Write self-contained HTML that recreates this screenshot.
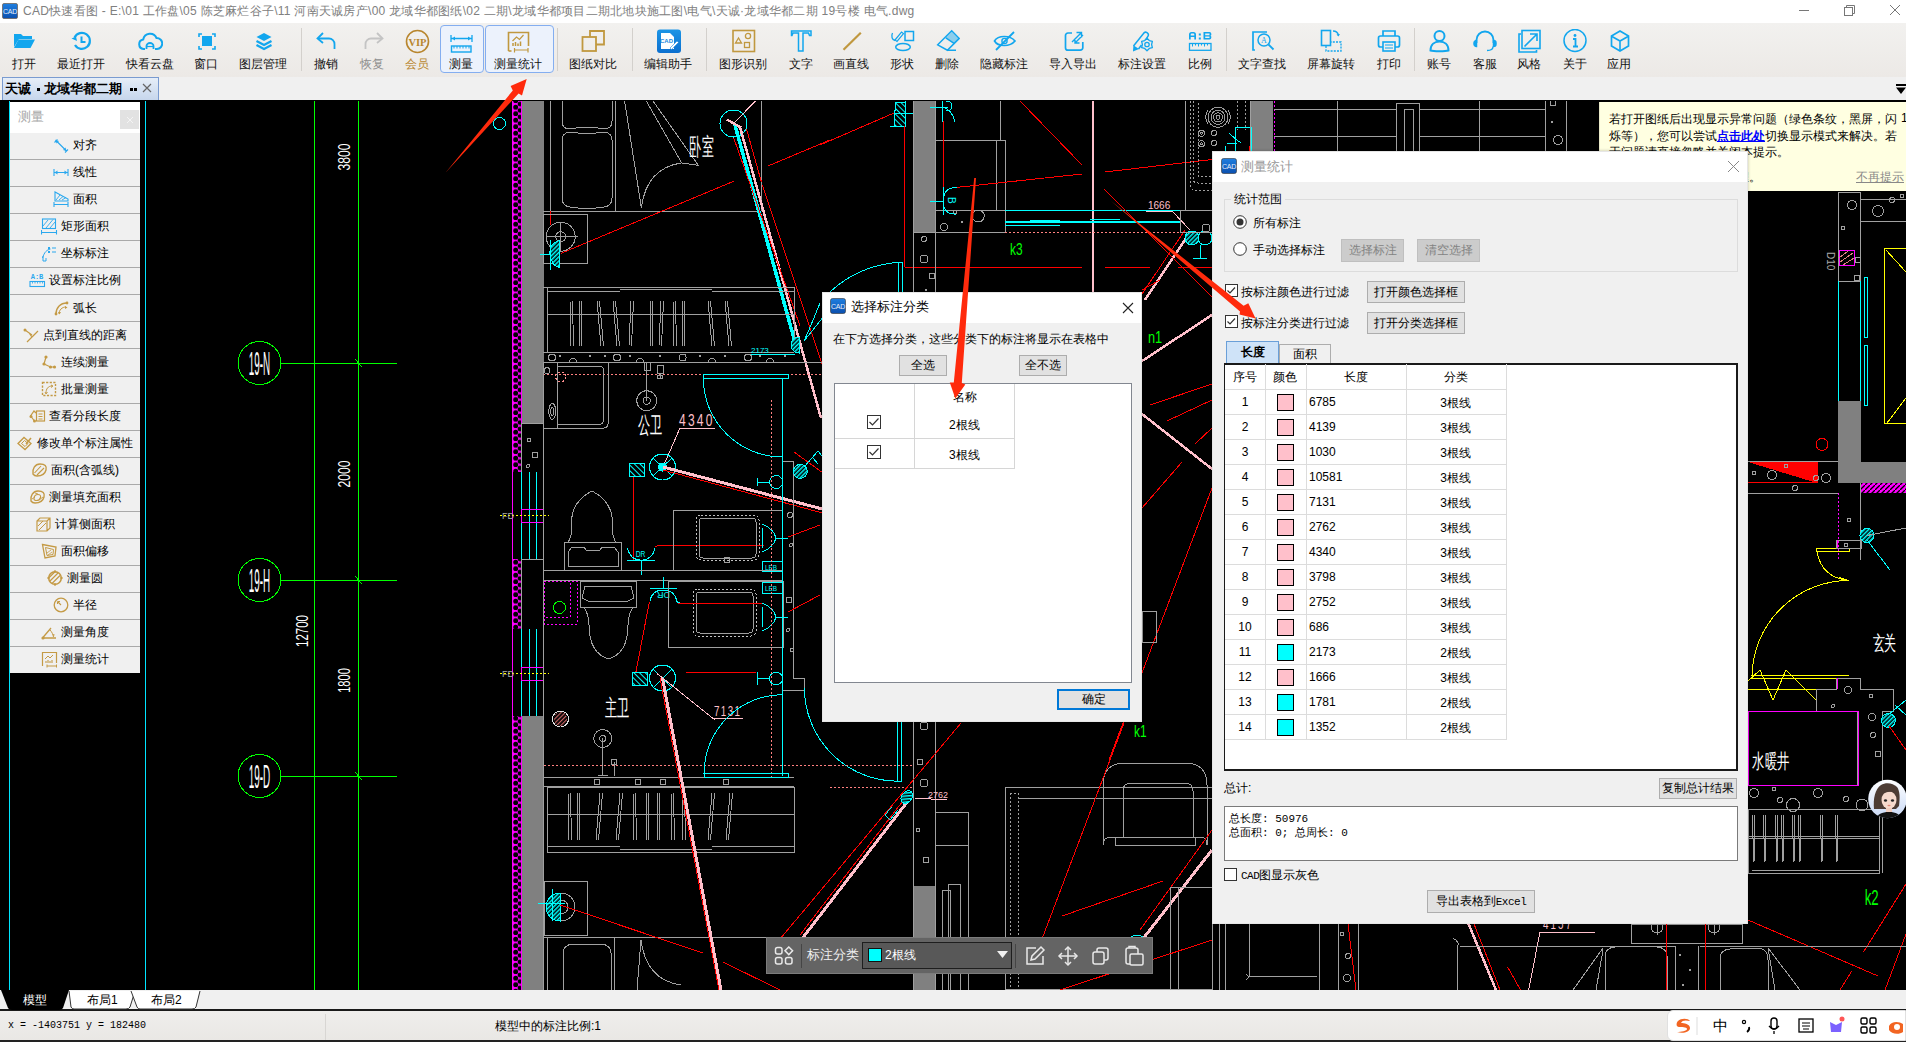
<!DOCTYPE html>
<html><head><meta charset="utf-8">
<style>
*{margin:0;padding:0;box-sizing:border-box}
html,body{width:1906px;height:1042px;overflow:hidden;background:#000;font-family:"Liberation Sans",sans-serif;font-size:12px;color:#000}
.a{position:absolute}
#title{left:0;top:0;width:1906px;height:23px;background:#fff}
#title .t{left:23px;top:3px;font-size:12px;color:#808080;white-space:nowrap;letter-spacing:.27px}
#tb{left:0;top:23px;width:1906px;height:54px;background:linear-gradient(#f2f1ef,#ece9e6)}
.ti{top:0;height:54px;text-align:center}
.ti .l{position:absolute;top:33px;left:-40px;width:80px;text-align:center;font-size:12px;color:#000;white-space:nowrap;font-weight:500}
.ti svg{position:absolute;left:-14px;top:5px}
.sep{top:5px;width:1px;height:43px;background:#d3d0cc}
#tabs{left:0;top:77px;width:1906px;height:24px;background:#f0f0f0}
#canvas{left:0;top:101px;width:1906px;height:889px;background:#000;overflow:hidden}
#ltabs{left:0;top:990px;width:1906px;height:21px;background:#f0f0f0;border-bottom:2px solid #1a1a1a}
#status{left:0;top:1011px;width:1906px;height:31px;background:linear-gradient(#efeeec,#e9e7e4)}
.lpr{left:10px;width:130px;height:26px;display:flex;align-items:center;justify-content:center;gap:3px;font-size:12px;color:#000;white-space:nowrap}
.lpr svg{flex:none}
.dlg{background:#f0f0f0;border:1px solid #e6e6e6;box-shadow:0 0 3px rgba(0,0,0,.25)}
.btn{background:#e1e1e1;border:1px solid #adadad;text-align:center;font-size:12px;line-height:19px;color:#000;white-space:nowrap}
.ctr{width:60px;text-align:center;font-size:12px;white-space:nowrap}
</style></head><body>
<div id="title" class="a">
<svg class="a" style="left:2px;top:3px" width="16" height="16"><defs><linearGradient id="ig1" x1="0" y1="0" x2="0" y2="1"><stop offset="0" stop-color="#1f7fe0"/><stop offset="1" stop-color="#0b4fae"/></linearGradient></defs><rect x="0.5" y="0.5" width="15" height="15" rx="1.5" fill="url(#ig1)" stroke="#6b5a4a" stroke-width=".7"/><text x="8" y="11" text-anchor="middle" font-size="7" fill="#e8eef8" font-family="Liberation Sans" letter-spacing="-.3">CAD</text></svg>
  <div class="t a">CAD快速看图 - E:\01 工作盘\05 陈芝麻烂谷子\11 河南天诚房产\00 龙域华都图纸\02 二期\龙域华都项目二期北地块施工图\电气\天诚·龙域华都二期 19号楼 电气.dwg</div>
<svg class="a" style="left:1790px;top:0" width="116" height="22"><path d="M9 10.5h10" stroke="#777" stroke-width="1"/><rect x="54.5" y="7.5" width="8" height="8" fill="none" stroke="#777"/><path d="M56.5 7.5V5.5h8v8h-2" fill="none" stroke="#777"/><path d="M100 5l10 10M110 5l-10 10" stroke="#777" stroke-width="1"/></svg>
</div>
<div id="tb" class="a">
<div class="a" style="left:440px;top:2px;width:44px;height:48px;border:1px solid #84aef0;border-radius:4px;background:#ecf2fc"></div>
<div class="a" style="left:485px;top:2px;width:69px;height:48px;border:1px solid #84aef0;border-radius:4px;background:#ecf2fc"></div>
<div class="ti a" style="left:23.5px"><svg width="25" height="25" viewBox="0 0 25 25" style="left:-12px;top:6px"><path d="M2 5h7l2 2h9v3H7L2 18z" fill="#12a6ee"/><path d="M6.5 10.5H23l-4.5 8.5H2z" fill="#12a6ee"/></svg><div class="l" style="color:#111">打开</div></div>
<div class="ti a" style="left:80.5px"><svg width="25" height="25" viewBox="0 0 25 25" style="left:-12px;top:6px"><path d="M5.6 8.5A8 8 0 1 1 6 16" fill="none" stroke="#12a6ee" stroke-width="2.2"/><path d="M2.5 9.5l4.5-2 1 4.5z" fill="#12a6ee"/><path d="M12.5 7.5v5.5h4" fill="none" stroke="#12a6ee" stroke-width="2"/></svg><div class="l" style="color:#111">最近打开</div></div>
<div class="ti a" style="left:149.5px"><svg width="25" height="25" viewBox="0 0 25 25" style="left:-12px;top:6px"><path d="M7 20H5.5A4.8 4.8 0 0 1 5.2 10.5 7 7 0 0 1 18.5 9a5.5 5.5 0 0 1 .5 11H17" fill="none" stroke="#12a6ee" stroke-width="2"/><path d="M8.5 20v-3a3.5 3 0 0 1 7 0v3" fill="none" stroke="#12a6ee" stroke-width="1.8"/><path d="M9 17.5h6" stroke="#12a6ee" stroke-width="1.2"/></svg><div class="l" style="color:#111">快看云盘</div></div>
<div class="ti a" style="left:206px"><svg width="25" height="25" viewBox="0 0 25 25" style="left:-12px;top:6px"><rect x="8" y="7" width="10" height="10" fill="#12a6ee"/><path d="M5 8V5h3M18 5h3v3M21 17v3h-3M8 20H5v-3" fill="none" stroke="#12a6ee" stroke-width="1.6"/></svg><div class="l" style="color:#111">窗口</div></div>
<div class="ti a" style="left:263.4px"><svg width="25" height="25" viewBox="0 0 25 25" style="left:-12px;top:6px"><path d="M13 4l7.5 4-7.5 4-7.5-4z" fill="#12a6ee"/><path d="M5.5 12l7.5 4 7.5-4" fill="none" stroke="#12a6ee" stroke-width="2.2"/><path d="M5.5 16l7.5 4 7.5-4" fill="none" stroke="#12a6ee" stroke-width="2.2"/></svg><div class="l" style="color:#111">图层管理</div></div>
<div class="ti a" style="left:326px"><svg width="25" height="25" viewBox="0 0 25 25" style="left:-12px;top:6px"><path d="M9 4L3.5 9.5 9 14" fill="none" stroke="#12a6ee" stroke-width="1.8"/><path d="M4 9.5h11a5.5 5.5 0 0 1 5.5 5.5v5" fill="none" stroke="#12a6ee" stroke-width="1.8"/></svg><div class="l" style="color:#111">撤销</div></div>
<div class="ti a" style="left:371.5px"><svg width="25" height="25" viewBox="0 0 25 25" style="left:-12px;top:6px"><path d="M17 4l5.5 5.5L17 14" fill="none" stroke="#c4c4c4" stroke-width="1.8"/><path d="M22 9.5H11a5.5 5.5 0 0 0-5.5 5.5v5" fill="none" stroke="#c4c4c4" stroke-width="1.8"/></svg><div class="l" style="color:#8f8f8f">恢复</div></div>
<div class="ti a" style="left:416.5px"><svg width="25" height="25" viewBox="0 0 25 25" style="left:-12px;top:6px"><circle cx="12.5" cy="12.5" r="11" fill="none" stroke="#b8862e" stroke-width="1.6"/><text x="12.5" y="16.5" text-anchor="middle" font-family="Liberation Serif" font-weight="bold" font-size="10.5" fill="#b8862e">VIP</text></svg><div class="l" style="color:#b8862e">会员</div></div>
<div class="ti a" style="left:461px"><svg width="25" height="25" viewBox="0 0 25 25" style="left:-12px;top:6px"><path d="M2 6v7M23 6v7M2.5 9.5h20" fill="none" stroke="#12a6ee" stroke-width="1.3"/><path d="M3 9.5l3-2v4zM22 9.5l-3-2v4z" fill="#12a6ee"/><rect x="2.5" y="17" width="19.5" height="6" fill="none" stroke="#12a6ee" stroke-width="1.4"/><path d="M5 17v2.5M8 17v2.5M11 17v2.5M14 17v2.5M17 17v2.5M20 17v2.5" stroke="#12a6ee" stroke-width="1"/></svg><div class="l" style="color:#111">测量</div></div>
<div class="ti a" style="left:518px"><svg width="25" height="25" viewBox="0 0 25 25" style="left:-12px;top:6px"><path d="M2.5 22V3.5h20V17" fill="none" stroke="#c0983f" stroke-width="1.6"/><path d="M2.5 22h3" stroke="#c0983f" stroke-width="1.6"/><path d="M6.5 12l4-4 3 2.5 4-4.5" fill="none" stroke="#c0983f" stroke-width="1.2"/><path d="M7 17v-3M9.5 17v-4M12 17v-2.5M14.5 17v-4.5" stroke="#c0983f" stroke-width="1.5"/><path d="M8.5 19v4.5M22 19v4.5M9 21h12.5" stroke="#c0983f" stroke-width="1.2"/></svg><div class="l" style="color:#111">测量统计</div></div>
<div class="ti a" style="left:593.4px"><svg width="25" height="25" viewBox="0 0 25 25" style="left:-12px;top:6px"><rect x="1.5" y="8" width="13.5" height="14" fill="none" stroke="#c0983f" stroke-width="1.8"/><path d="M9 8V2h14v13.5h-8" fill="none" stroke="#c0983f" stroke-width="1.8"/></svg><div class="l" style="color:#111">图纸对比</div></div>
<div class="ti a" style="left:668px"><svg width="25" height="25" viewBox="0 0 25 25" style="left:-12px;top:6px"><defs><linearGradient id="eg" x1="0" y1="0" x2="0" y2="1"><stop offset="0" stop-color="#1c95e6"/><stop offset="1" stop-color="#0b6fcf"/></linearGradient></defs><rect x="1" y="0.5" width="24" height="23.5" rx="3" fill="url(#eg)"/><path d="M5 4h9l4 4v12H5z" fill="#fff"/><text x="10.5" y="14" text-anchor="middle" font-size="6" font-weight="bold" fill="#1a88dd" font-family="Liberation Sans">CAD</text><path d="M14 19l7-7 1.5 1.5-7 7z" fill="#fff" stroke="#1a88dd" stroke-width=".6"/></svg><div class="l" style="color:#111">编辑助手</div></div>
<div class="ti a" style="left:743px"><svg width="25" height="25" viewBox="0 0 25 25" style="left:-12px;top:6px"><rect x="2" y="1.5" width="21.5" height="21" fill="none" stroke="#c0983f" stroke-width="1.6"/><path d="M4.5 14l3-5 3 5z" fill="none" stroke="#c0983f" stroke-width="1.3"/><circle cx="17" cy="7" r="2.6" fill="none" stroke="#c0983f" stroke-width="1.3"/><rect x="13.5" y="13.5" width="5" height="5" fill="none" stroke="#c0983f" stroke-width="1.3"/></svg><div class="l" style="color:#111">图形识别</div></div>
<div class="ti a" style="left:801px"><svg width="25" height="25" viewBox="0 0 25 25" style="left:-12px;top:6px"><path d="M2.5 2h19.5v4.5h-1.5l-1-2.5h-5.5v18h-4.5V4H4l-1 2.5H2.5z" fill="none" stroke="#12a6ee" stroke-width="1.5"/></svg><div class="l" style="color:#111">文字</div></div>
<div class="ti a" style="left:851px"><svg width="25" height="25" viewBox="0 0 25 25" style="left:-12px;top:6px"><path d="M4.5 20.7L21.8 3.8" stroke="#c0983f" stroke-width="2.2"/></svg><div class="l" style="color:#111">画直线</div></div>
<div class="ti a" style="left:902px"><svg width="25" height="25" viewBox="0 0 25 25" style="left:-12px;top:6px"><rect x="15" y="2.5" width="8.5" height="9" fill="none" stroke="#12a6ee" stroke-width="1.5"/><ellipse cx="13" cy="18" rx="7.3" ry="3.6" fill="none" stroke="#12a6ee" stroke-width="1.5"/><path d="M5 11L11.5 3l2 1.6L7 12.5z" fill="none" stroke="#12a6ee" stroke-width="1.2"/><path d="M2.5 4c-1.5 3-.5 7 2.5 7.5" fill="none" stroke="#12a6ee" stroke-width="1.3"/></svg><div class="l" style="color:#111">形状</div></div>
<div class="ti a" style="left:947px"><svg width="25" height="25" viewBox="0 0 25 25" style="left:-12px;top:6px"><path d="M2.7 15.8L16.7 1.8 24.2 9.4 12.4 21.2z" fill="none" stroke="#12a6ee" stroke-width="1.5"/><path d="M10.8 8.8L16.7 2.8 23.2 9.4 19.4 14.7z" fill="#12a6ee" opacity=".45"/><path d="M10.8 8.8L19.4 14.7M12.4 21.2H21" stroke="#12a6ee" stroke-width="1.4"/></svg><div class="l" style="color:#111">删除</div></div>
<div class="ti a" style="left:1004px"><svg width="25" height="25" viewBox="0 0 25 25" style="left:-12px;top:6px"><path d="M2.5 12C6 6 18 6 23 12c-5 6-17 6-20.5 0z" fill="none" stroke="#12a6ee" stroke-width="1.7"/><circle cx="12.5" cy="12" r="2.6" fill="none" stroke="#12a6ee" stroke-width="1.4"/><path d="M4 21L22 3" stroke="#12a6ee" stroke-width="1.8"/></svg><div class="l" style="color:#111">隐藏标注</div></div>
<div class="ti a" style="left:1073px"><svg width="25" height="25" viewBox="0 0 25 25" style="left:-12px;top:6px"><path d="M11 4H7a2.5 2.5 0 0 0-2.5 2.5v12.2A2.5 2.5 0 0 0 7 21.2h12.3a2.5 2.5 0 0 0 2.5-2.5V13" fill="none" stroke="#12a6ee" stroke-width="1.7"/><path d="M11 13l9-9M15.5 3.5H20.5V8.5M22 6l-8 8M14 9.5V14h4.5" fill="none" stroke="#12a6ee" stroke-width="1.4"/></svg><div class="l" style="color:#111">导入导出</div></div>
<div class="ti a" style="left:1142px"><svg width="25" height="25" viewBox="0 0 25 25" style="left:-12px;top:6px"><path d="M3.5 17L13.5 4.5a2.6 2.6 0 0 1 4.5 2.6L15.3 11.5M8.5 20L11.5 16" fill="none" stroke="#12a6ee" stroke-width="1.5" stroke-linejoin="round"/><path d="M3 22.5l.4-6.2 5.6 3.7z" fill="#12a6ee"/><path d="M17.00 9.30 L19.30 11.52 L22.37 12.40 L21.60 15.50 L22.37 18.60 L19.30 19.48 L17.00 21.70 L14.70 19.48 L11.63 18.60 L12.40 15.50 L11.63 12.40 L14.70 11.52Z" fill="#efedea" stroke="#12a6ee" stroke-width="1.3" stroke-linejoin="round"/><circle cx="17" cy="15.5" r="2.2" fill="none" stroke="#12a6ee" stroke-width="1.3"/></svg><div class="l" style="color:#111">标注设置</div></div>
<div class="ti a" style="left:1200px"><svg width="25" height="25" viewBox="0 0 25 25" style="left:-12px;top:6px"><g fill="#12a6ee"><path d="M1 10.5V5.5Q1 3 3.5 3h2Q8 3 8 5.5v5H6.3V8H2.7v2.5zM2.7 6.5h3.6v-1q0-1-1-1H3.7q-1 0-1 1z"/><rect x="10.8" y="4.5" width="2" height="2"/><rect x="10.8" y="8.5" width="2" height="2"/><path fill-rule="evenodd" d="M15.5 3h6q1.8 0 1.8 1.8v1.2l-.8.8.8.8v1.2Q23.3 10.5 21.5 10.5h-6zM17.2 4.5v1.7h4.3V4.5zM17.2 7.4v1.7h4.3V7.4z"/></g><rect x="1.5" y="14.5" width="21.5" height="6.8" fill="none" stroke="#12a6ee" stroke-width="1.3"/><path d="M4.5 15v2.5M7.5 15v1.5M10.5 15v2.5M13.5 15v1.5M16.5 15v2.5M19.5 15v1.5" stroke="#12a6ee" stroke-width="1"/></svg><div class="l" style="color:#111">比例</div></div>
<div class="ti a" style="left:1262px"><svg width="25" height="25" viewBox="0 0 25 25" style="left:-12px;top:6px"><path d="M17 3H3v18h2" fill="none" stroke="#12a6ee" stroke-width="1.7"/><circle cx="14" cy="11" r="6" fill="none" stroke="#12a6ee" stroke-width="1.5"/><path d="M18.5 15.5l5 5" stroke="#12a6ee" stroke-width="1.8"/><text x="14" y="14" text-anchor="middle" font-size="8" fill="#12a6ee" font-family="Liberation Serif">A</text></svg><div class="l" style="color:#111">文字查找</div></div>
<div class="ti a" style="left:1331px"><svg width="25" height="25" viewBox="0 0 25 25" style="left:-12px;top:6px"><rect x="2.5" y="1.5" width="9" height="15" fill="none" stroke="#12a6ee" stroke-width="1.6"/><path d="M7 17v5h15v-9h-10" fill="none" stroke="#12a6ee" stroke-width="1.3" stroke-dasharray="2 1.2"/><path d="M14 2c3 0 5 2 5.5 4.5" fill="none" stroke="#12a6ee" stroke-width="1.3"/><path d="M17.5 5.5l2 2 1.5-2.5z" fill="#12a6ee"/></svg><div class="l" style="color:#111">屏幕旋转</div></div>
<div class="ti a" style="left:1389px"><svg width="25" height="25" viewBox="0 0 25 25" style="left:-12px;top:6px"><path d="M6 7V2h12v5" fill="none" stroke="#12a6ee" stroke-width="1.7"/><rect x="1.5" y="7" width="21" height="11" rx="2" fill="none" stroke="#12a6ee" stroke-width="1.7"/><rect x="6" y="13" width="12" height="9" fill="#f0efed" stroke="#12a6ee" stroke-width="1.6"/><path d="M8 16h8M8 19h8" stroke="#12a6ee" stroke-width="1"/></svg><div class="l" style="color:#111">打印</div></div>
<div class="ti a" style="left:1439px"><svg width="25" height="25" viewBox="0 0 25 25" style="left:-12px;top:6px"><circle cx="12.5" cy="7" r="5" fill="none" stroke="#12a6ee" stroke-width="2"/><path d="M3.5 21.5c0-6 4-9 9-9s9 3 9 9c-3 1-15 1-18 0z" fill="none" stroke="#12a6ee" stroke-width="2"/></svg><div class="l" style="color:#111">账号</div></div>
<div class="ti a" style="left:1485px"><svg width="25" height="25" viewBox="0 0 25 25" style="left:-12px;top:6px"><path d="M3.5 14V11a8.5 8.5 0 0 1 17 0v3" fill="none" stroke="#12a6ee" stroke-width="1.8"/><path d="M3.5 11.5v6a2.5 2.5 0 0 1-2.5-2.5v-1a2.5 2.5 0 0 1 2.5-2.5zM20.5 11.5v6a2.5 2.5 0 0 0 2.5-2.5v-1a2.5 2.5 0 0 0-2.5-2.5z" fill="#12a6ee" stroke="#12a6ee" stroke-width="1.5"/><path d="M20 17.5c0 3-2 4-6 4" fill="none" stroke="#12a6ee" stroke-width="1.3"/></svg><div class="l" style="color:#111">客服</div></div>
<div class="ti a" style="left:1529px"><svg width="25" height="25" viewBox="0 0 25 25" style="left:-12px;top:6px"><path d="M4 5H2v18h17.5v-2" fill="none" stroke="#12a6ee" stroke-width="1.6"/><rect x="5" y="1.5" width="18" height="18" fill="none" stroke="#12a6ee" stroke-width="1.6"/><path d="M7.5 17.5L20 5M13 5h7v7" fill="none" stroke="#12a6ee" stroke-width="1.6"/></svg><div class="l" style="color:#111">风格</div></div>
<div class="ti a" style="left:1575px"><svg width="25" height="25" viewBox="0 0 25 25" style="left:-12px;top:6px"><circle cx="12" cy="11.5" r="11" fill="none" stroke="#12a6ee" stroke-width="1.5"/><circle cx="12" cy="6.5" r="1.4" fill="#12a6ee"/><path d="M10 10h2.5v7.5M10 17.5h5" fill="none" stroke="#12a6ee" stroke-width="1.8"/></svg><div class="l" style="color:#111">关于</div></div>
<div class="ti a" style="left:1619px"><svg width="25" height="25" viewBox="0 0 25 25" style="left:-12px;top:6px"><path d="M13 2l8.5 5v10L13 22l-8.5-5V7z" fill="none" stroke="#12a6ee" stroke-width="1.7"/><path d="M5 7.5l8 4.5 8-4.5M13 12v9.5" fill="none" stroke="#12a6ee" stroke-width="1.6"/></svg><div class="l" style="color:#111">应用</div></div>
<div class="sep a" style="left:301px"></div>
<div class="sep a" style="left:557px"></div>
<div class="sep a" style="left:632px"></div>
<div class="sep a" style="left:706px"></div>
<div class="sep a" style="left:1226px"></div>
<div class="sep a" style="left:1414px"></div>
</div>
<div id="tabs" class="a">
<div class="a" style="left:2px;top:0;width:157px;height:24px;border:1px solid #7a9bd0;background:linear-gradient(#e6eef8,#c6d6ec);"></div>
<div class="a" style="left:5px;top:3px;font-size:13px;font-weight:bold;color:#000;white-space:nowrap">天诚</div>
<div class="a" style="left:37px;top:88px;top:11px;width:3px;height:3px;background:#000"></div>
<div class="a" style="left:44px;top:3px;font-size:13px;font-weight:bold;color:#000;white-space:nowrap">龙域华都二期</div>
<div class="a" style="left:130px;top:11px;width:2.5px;height:3px;background:#000"></div><div class="a" style="left:134px;top:11px;width:2.5px;height:3px;background:#000"></div>
<svg class="a" style="left:142px;top:6px" width="10" height="10"><path d="M1 1l8 8M9 1l-8 8" stroke="#666" stroke-width="1.2"/></svg>
<svg class="a" style="left:1896px;top:7px" width="10" height="12"><path d="M0 0h10v2H0z M0 3.5h10L5 10z" fill="#000"/></svg>
<div class="a" style="left:0;top:23px;width:1906px;height:1px;background:#000"></div>
</div>
<div id="canvas" class="a">
<svg class="a" style="left:0;top:-101px" width="1906" height="1042" font-family="Liberation Sans"><defs>
<pattern id="mghatch" x="512" y="0" width="9" height="6.5" patternUnits="userSpaceOnUse"><rect width="9" height="6.5" fill="#ff00ff"/><circle cx="3.7" cy="3.2" r="2.45" fill="#000"/><circle cx="7.9" cy="0" r="2.3" fill="#000"/><circle cx="7.9" cy="6.5" r="2.3" fill="#000"/></pattern>
<pattern id="cyhatch" width="3" height="3" patternUnits="userSpaceOnUse" patternTransform="rotate(45)"><rect width="3" height="3" fill="#000"/><rect width="1.5" height="3" fill="#00ffff"/></pattern>
<pattern id="brhatch" width="3" height="3" patternUnits="userSpaceOnUse" patternTransform="rotate(45)"><rect width="3" height="3" fill="#000"/><rect width="1.2" height="3" fill="#c86464"/></pattern>
<pattern id="mghatch2" width="5" height="5" patternUnits="userSpaceOnUse"><rect width="5" height="5" fill="#ff00ff"/><path d="M0 5L5 0" stroke="#000" stroke-width="1.3"/></pattern>
<pattern id="cyhatch2" width="4" height="4" patternUnits="userSpaceOnUse" patternTransform="rotate(-45)"><rect width="4" height="4" fill="#000"/><rect width="1" height="4" fill="#00ffff"/></pattern>
</defs><g shape-rendering="crispEdges"><line x1="314.5" y1="101" x2="314.5" y2="990" stroke="#00ff00" stroke-width="1" />
<line x1="358.5" y1="101" x2="358.5" y2="990" stroke="#00ff00" stroke-width="1" />
<circle cx="259.5" cy="363" r="21.5" stroke="#00ff00" stroke-width="1" fill="none" />
<line x1="281" y1="363.5" x2="397" y2="363.5" stroke="#00ff00" stroke-width="1" />
<text x="259.5" y="375" fill="#fff" font-size="33" text-anchor="middle" transform="translate(259.5 363) scale(.3 1) translate(-259.5 -363)" font-family="Liberation Sans">19-N</text>
<line x1="355" y1="359" x2="362" y2="367" stroke="#00ff00" stroke-width="1" />
<circle cx="259.5" cy="580" r="21.5" stroke="#00ff00" stroke-width="1" fill="none" />
<line x1="281" y1="580.5" x2="397" y2="580.5" stroke="#00ff00" stroke-width="1" />
<text x="259.5" y="592" fill="#fff" font-size="33" text-anchor="middle" transform="translate(259.5 580) scale(.3 1) translate(-259.5 -580)" font-family="Liberation Sans">19-H</text>
<line x1="355" y1="576" x2="362" y2="584" stroke="#00ff00" stroke-width="1" />
<circle cx="259.5" cy="776" r="21.5" stroke="#00ff00" stroke-width="1" fill="none" />
<line x1="281" y1="776.5" x2="397" y2="776.5" stroke="#00ff00" stroke-width="1" />
<text x="259.5" y="788" fill="#fff" font-size="33" text-anchor="middle" transform="translate(259.5 776) scale(.3 1) translate(-259.5 -776)" font-family="Liberation Sans">19-D</text>
<line x1="355" y1="772" x2="362" y2="780" stroke="#00ff00" stroke-width="1" />
<text x="0" y="0" fill="#fff" font-size="23" text-anchor="middle" transform="translate(350 157) rotate(-90) scale(0.53 .75)" font-family="Liberation Sans">3800</text>
<text x="0" y="0" fill="#fff" font-size="23" text-anchor="middle" transform="translate(349.5 474) rotate(-90) scale(0.53 .75)" font-family="Liberation Sans">2000</text>
<text x="0" y="0" fill="#fff" font-size="23" text-anchor="middle" transform="translate(307.5 631) rotate(-90) scale(0.5 .75)" font-family="Liberation Sans">12700</text>
<text x="0" y="0" fill="#fff" font-size="23" text-anchor="middle" transform="translate(350 680.5) rotate(-90) scale(0.48 .75)" font-family="Liberation Sans">1800</text>
<rect x="512" y="101" width="9.5" height="889" stroke="none" stroke-width="0" fill="#ff00ff" />
<rect x="512" y="101" width="9.5" height="889" fill="url(#mghatch)"/>
<line x1="512.7" y1="101" x2="512.7" y2="990" stroke="#ff00ff" stroke-width="1.4" />
<rect x="521.5" y="101" width="22" height="889" stroke="none" stroke-width="0" fill="#808080" />
<rect x="521.5" y="423" width="22" height="49" stroke="none" stroke-width="0" fill="#000" />
<rect x="521.5" y="423" width="22" height="49" stroke="#a0a0a0" stroke-width="1" fill="none" />
<rect x="521.5" y="472" width="22" height="87" stroke="none" stroke-width="0" fill="#000" />
<rect x="512" y="472" width="9.5" height="87" stroke="none" stroke-width="0" fill="#000" />
<line x1="521.5" y1="472" x2="521.5" y2="559" stroke="#00ffff" stroke-width="1" />
<line x1="529.5" y1="472" x2="529.5" y2="559" stroke="#00ffff" stroke-width="1" />
<line x1="536.5" y1="472" x2="536.5" y2="559" stroke="#00ffff" stroke-width="1" />
<line x1="543.5" y1="472" x2="543.5" y2="559" stroke="#00ffff" stroke-width="1" />
<line x1="512.5" y1="472" x2="512.5" y2="559" stroke="#ff00ff" stroke-width="1" />
<rect x="521.5" y="509" width="22" height="13" stroke="#ff00ff" stroke-width="1" fill="none" />
<line x1="500" y1="515" x2="549" y2="515" stroke="#ffff00" stroke-width="1" stroke-dasharray="2 2"/>
<text x="502" y="519" fill="#aaa" font-size="9" >FD</text>
<rect x="521.5" y="559" width="22" height="70" stroke="none" stroke-width="0" fill="#000" />
<rect x="521.5" y="559" width="22" height="70" stroke="#a0a0a0" stroke-width="1" fill="none" />
<rect x="521.5" y="629" width="22" height="87" stroke="none" stroke-width="0" fill="#000" />
<rect x="512" y="629" width="9.5" height="87" stroke="none" stroke-width="0" fill="#000" />
<line x1="521.5" y1="629" x2="521.5" y2="716" stroke="#00ffff" stroke-width="1" />
<line x1="529.5" y1="629" x2="529.5" y2="716" stroke="#00ffff" stroke-width="1" />
<line x1="536.5" y1="629" x2="536.5" y2="716" stroke="#00ffff" stroke-width="1" />
<line x1="543.5" y1="629" x2="543.5" y2="716" stroke="#00ffff" stroke-width="1" />
<line x1="512.5" y1="629" x2="512.5" y2="716" stroke="#ff00ff" stroke-width="1" />
<rect x="521.5" y="667" width="22" height="13" stroke="#ff00ff" stroke-width="1" fill="none" />
<line x1="500" y1="673" x2="549" y2="673" stroke="#ffff00" stroke-width="1" stroke-dasharray="2 2"/>
<text x="502" y="677" fill="#aaa" font-size="9" >FD</text>
<circle cx="499.5" cy="123.5" r="6" stroke="#00ffff" stroke-width="1" fill="none" />
<line x1="550" y1="101" x2="550" y2="211" stroke="#a0a0a0" stroke-width="1" />
<line x1="615.5" y1="101" x2="615.5" y2="211" stroke="#a0a0a0" stroke-width="1" />
<line x1="761.5" y1="101" x2="761.5" y2="211" stroke="#a0a0a0" stroke-width="1" />
<line x1="543" y1="211" x2="761" y2="211" stroke="#a0a0a0" stroke-width="1" />
<path d="M562 101v20q0 8 8 8q17-4 34 0q8 0 8-8V101" stroke="#a0a0a0" stroke-width="1" fill="none" />
<path d="M562 140q0-7 8-8q17 3 34 0q8 1 8 8v58q0 8-8 9q-17 3-34 0q-8-1-8-9z" stroke="#a0a0a0" stroke-width="1" fill="none" />
<path d="M624.6 101L641.4 208M646.3 101l35.4 61.9M653 101l45.4 64.4l-16.7-2.5q-35 5-40.3 44.5" stroke="#a0a0a0" stroke-width="1" fill="none" />
<text x="689.5" y="155" fill="#fff" font-size="24" transform="translate(689.5 155) scale(.5 1) translate(-689.5 -155)">卧室</text>
<circle cx="733.5" cy="123.5" r="13.5" stroke="#00ffff" stroke-width="1" fill="none" />
<line x1="734.8" y1="124.5" x2="798" y2="353" stroke="#00ffff" stroke-width="3.5" />
<line x1="740" y1="127" x2="821" y2="418" stroke="#ffc0cb" stroke-width="2.5" />
<line x1="727" y1="119.6" x2="741" y2="127.5" stroke="#ffc0cb" stroke-width="2.5" />
<line x1="733" y1="124" x2="755.5" y2="101" stroke="#ffc0cb" stroke-width="1" />
<line x1="733.8" y1="138.3" x2="800" y2="326" stroke="#ff0000" stroke-width="1" />
<line x1="746.6" y1="129.4" x2="761.3" y2="181.6" stroke="#ff0000" stroke-width="1" />
<line x1="762.4" y1="185.5" x2="830" y2="388" stroke="#ff0000" stroke-width="1" />
<line x1="560.7" y1="253.4" x2="733.8" y2="181.2" stroke="#ff0000" stroke-width="1" />
<line x1="550.2" y1="211" x2="550.2" y2="225" stroke="#ff0000" stroke-width="1" />
<line x1="768" y1="166" x2="830" y2="140" stroke="#ff0000" stroke-width="1" />
<rect x="543.5" y="214" width="44" height="49.3" stroke="#a0a0a0" stroke-width="1" fill="none" />
<circle cx="560.7" cy="236.7" r="14.5" stroke="#a0a0a0" stroke-width="1" fill="none" />
<circle cx="560.7" cy="236.7" r="5" stroke="#a0a0a0" stroke-width="1" fill="none" />
<line x1="546" y1="236.7" x2="578" y2="236.7" stroke="#a0a0a0" stroke-width="1" />
<line x1="560.7" y1="222" x2="560.7" y2="251" stroke="#a0a0a0" stroke-width="1" />
<path d="M559 240.6q-10 3-9 13q1 12 9 13.6z" stroke="#00ffff" stroke-width="1" fill="url(#cyhatch)" />
<line x1="540" y1="254.4" x2="551" y2="254.4" stroke="#00ffff" stroke-width="1" />
<line x1="550.8" y1="240" x2="550.8" y2="270" stroke="#00ffff" stroke-width="1" />
<line x1="543" y1="287" x2="794" y2="287" stroke="#a0a0a0" stroke-width="1" />
<line x1="547" y1="291" x2="620" y2="291" stroke="#a0a0a0" stroke-width="1" />
<line x1="620" y1="289" x2="712" y2="289" stroke="#a0a0a0" stroke-width="1" />
<line x1="712" y1="291" x2="794" y2="291" stroke="#a0a0a0" stroke-width="1" />
<line x1="547" y1="314" x2="794" y2="314" stroke="#a0a0a0" stroke-width="1" />
<line x1="547" y1="287" x2="547" y2="352" stroke="#a0a0a0" stroke-width="1" />
<line x1="794" y1="287" x2="794" y2="352" stroke="#a0a0a0" stroke-width="1" />
<path d="M570 301l1 45M572.5 301l1 45" stroke="#a0a0a0" stroke-width="1" fill="none" />
<path d="M579 301l0 45M581.5 301l0 45" stroke="#a0a0a0" stroke-width="1" fill="none" />
<path d="M597 301l4 45M599.5 301l4 45" stroke="#a0a0a0" stroke-width="1" fill="none" />
<path d="M613 301l4 45M615.5 301l4 45" stroke="#a0a0a0" stroke-width="1" fill="none" />
<path d="M631 301l-2 45M633.5 301l-2 45" stroke="#a0a0a0" stroke-width="1" fill="none" />
<path d="M650 301l0 45M652.5 301l0 45" stroke="#a0a0a0" stroke-width="1" fill="none" />
<path d="M661 301l-2 45M663.5 301l-2 45" stroke="#a0a0a0" stroke-width="1" fill="none" />
<path d="M673 301l1 45M675.5 301l1 45" stroke="#a0a0a0" stroke-width="1" fill="none" />
<path d="M682 301l0 45M684.5 301l0 45" stroke="#a0a0a0" stroke-width="1" fill="none" />
<path d="M708 301l4 45M710.5 301l4 45" stroke="#a0a0a0" stroke-width="1" fill="none" />
<path d="M725 301l4 45M727.5 301l4 45" stroke="#a0a0a0" stroke-width="1" fill="none" />
<line x1="543" y1="352.5" x2="794" y2="352.5" stroke="#a0a0a0" stroke-width="1" />
<line x1="543" y1="362.5" x2="830" y2="362.5" stroke="#a0a0a0" stroke-width="1" />
<circle cx="552" cy="357.5" r="3.5" stroke="#a0a0a0" stroke-width="1" fill="none" />
<circle cx="617" cy="357.5" r="3.5" stroke="#a0a0a0" stroke-width="1" fill="none" />
<circle cx="682.6" cy="357.5" r="3.5" stroke="#a0a0a0" stroke-width="1" fill="none" />
<circle cx="748" cy="357.5" r="3.5" stroke="#a0a0a0" stroke-width="1" fill="none" />
<path d="M569 362.5a4 4 0 0 1 8 0" stroke="#a0a0a0" stroke-width="1" fill="none" />
<path d="M636 362.5a4 4 0 0 1 8 0" stroke="#a0a0a0" stroke-width="1" fill="none" />
<path d="M708 362.5a4 4 0 0 1 8 0" stroke="#a0a0a0" stroke-width="1" fill="none" />
<path d="M766 362.5a4 4 0 0 1 8 0" stroke="#a0a0a0" stroke-width="1" fill="none" />
<circle cx="560" cy="356" r="0.6" stroke="#a0a0a0" stroke-width="1" fill="none" />
<circle cx="590" cy="356" r="0.6" stroke="#a0a0a0" stroke-width="1" fill="none" />
<circle cx="605" cy="356" r="0.6" stroke="#a0a0a0" stroke-width="1" fill="none" />
<circle cx="630" cy="356" r="0.6" stroke="#a0a0a0" stroke-width="1" fill="none" />
<circle cx="660" cy="356" r="0.6" stroke="#a0a0a0" stroke-width="1" fill="none" />
<circle cx="700" cy="356" r="0.6" stroke="#a0a0a0" stroke-width="1" fill="none" />
<circle cx="725" cy="356" r="0.6" stroke="#a0a0a0" stroke-width="1" fill="none" />
<circle cx="760" cy="356" r="0.6" stroke="#a0a0a0" stroke-width="1" fill="none" />
<circle cx="785" cy="356" r="0.6" stroke="#a0a0a0" stroke-width="1" fill="none" />
<line x1="543" y1="374.5" x2="830" y2="374.5" stroke="#ff8080" stroke-width="1" stroke-dasharray="2 2"/>
<circle cx="560.7" cy="376.9" r="5" stroke="#ff9090" stroke-width="1" fill="none" stroke-dasharray="2 2"/>
<circle cx="547" cy="370.7" r="3" stroke="#a0a0a0" stroke-width="1" fill="none" />
<line x1="543" y1="362" x2="543" y2="990" stroke="#a0a0a0" stroke-width="1" />
<circle cx="646.7" cy="400.7" r="10" stroke="#a0a0a0" stroke-width="1" fill="none" />
<circle cx="646.7" cy="400.7" r="3.5" stroke="#a0a0a0" stroke-width="1" fill="none" />
<line x1="646.7" y1="363" x2="646.7" y2="400.7" stroke="#a0a0a0" stroke-width="1" />
<path d="M644 363v7h6v-7M657 365h6v8h-6zM660 373v5" stroke="#a0a0a0" stroke-width="1" fill="none" />
<ellipse cx="660" cy="377" rx="3" ry="2" stroke="#a0a0a0" fill="none"/>
<text x="751" y="353" fill="#00ffff" font-size="8" >2173</text>
<line x1="751" y1="354" x2="795" y2="354" stroke="#00ffff" stroke-width="1" />
<path d="M799 337a8 8 0 0 0 0 16z" stroke="#00ffff" stroke-width="1" fill="url(#cyhatch)" />
<path d="M543.8 363v65.3h58.5q6 0 6-6V363" stroke="#a0a0a0" stroke-width="1" fill="none" />
<path d="M557.2 366h41.5q5 0 5 5v48.5q0 5-5 5h-41.5" stroke="#a0a0a0" stroke-width="1" fill="none" />
<line x1="557.2" y1="363" x2="557.2" y2="428" stroke="#a0a0a0" stroke-width="1" />
<ellipse cx="552.3" cy="411.4" rx="3.5" ry="8" stroke="#a0a0a0" fill="none"/><ellipse cx="552.3" cy="411.4" rx="1.5" ry="4" stroke="#a0a0a0" fill="none"/>
<circle cx="529" cy="440" r="2" stroke="#a0a0a0" stroke-width="1" fill="none" />
<circle cx="535" cy="455" r="3" stroke="#a0a0a0" stroke-width="1" fill="none" />
<circle cx="528" cy="466" r="1.5" stroke="#a0a0a0" stroke-width="1" fill="none" />
<text x="638.3" y="433" fill="#fff" font-size="23" transform="translate(638.3 433) scale(.53 1) translate(-638.3 -433)">公卫</text>
<path d="M679 428h36" stroke="#ffc0cb" stroke-width="1" fill="none" />
<text x="679" y="426" fill="#ffc0cb" font-size="16" transform="translate(679 426) scale(.75 1) translate(-679 -426)" letter-spacing="3">4340</text>
<line x1="680" y1="428" x2="663" y2="467" stroke="#ffc0cb" stroke-width="1" />
<circle cx="662.5" cy="467" r="13" stroke="#00ffff" stroke-width="1" fill="none" />
<line x1="653" y1="458" x2="672" y2="476" stroke="#00ffff" stroke-width="1" />
<line x1="653" y1="476" x2="672" y2="458" stroke="#00ffff" stroke-width="1" />
<circle cx="662.5" cy="467" r="4" stroke="#00ffff" stroke-width="1" fill="#00ffff" />
<line x1="663" y1="467" x2="830" y2="511" stroke="#ffc0cb" stroke-width="3" />
<line x1="663" y1="470" x2="830" y2="515" stroke="#ff0000" stroke-width="1" />
<rect x="629" y="463.2" width="15" height="13.5" stroke="#00ffff" stroke-width="1" fill="url(#cyhatch2)" />
<line x1="633.4" y1="477" x2="633.4" y2="560" stroke="#ff0000" stroke-width="1" />
<path d="M568 543q3-6 4-12q-4-28 20-40q24 12 20 40q1 6 4 12" stroke="#a0a0a0" stroke-width="1" fill="none" />
<path d="M568 552l4-5h12l2 3h14l2-3h12l4 5v14h-50z" stroke="#a0a0a0" stroke-width="1" fill="none" />
<rect x="564" y="542.5" width="57" height="28" stroke="#a0a0a0" stroke-width="1" fill="none" />
<path d="M627.3 548q3 12 14 12.3q11-.3 13.7-12.3" stroke="#00ffff" stroke-width="1" fill="none" />
<text x="640.5" y="557" fill="#00ffff" font-size="9" text-anchor="middle" transform="translate(640.5 557) scale(.75 1) translate(-640.5 -557)">DR</text>
<line x1="627" y1="560.3" x2="655" y2="560.3" stroke="#00ffff" stroke-width="1" />
<line x1="641.3" y1="560" x2="641.3" y2="574.6" stroke="#00ffff" stroke-width="1" />
<path d="M655 547q2-2 6-2h102.6" stroke="#ff0000" stroke-width="1" fill="none" />
<rect x="673.5" y="510" width="109" height="60" stroke="#a0a0a0" stroke-width="1" fill="none" />
<rect x="696" y="515" width="63" height="45" stroke="#c0c0c0" stroke-width="1" fill="none" rx="5" stroke-dasharray="2 2"/>
<rect x="699" y="518" width="57" height="40" stroke="#a0a0a0" stroke-width="1" fill="none" rx="4"/>
<circle cx="727" cy="560" r="3" stroke="#a0a0a0" stroke-width="1" fill="none" />
<rect x="762.6" y="561" width="20.2" height="10.8" stroke="#00ffff" stroke-width="1" fill="none" />
<text x="765" y="570" fill="#00ffff" font-size="8" transform="translate(765 570) scale(.8 1) translate(-765 -570)">LEB</text>
<path d="M762 524q12 5 14 14q-2 9-14 14M762 528v20M776 538h11.6" stroke="#00ffff" stroke-width="1" fill="none" />
<line x1="544" y1="570" x2="783" y2="570" stroke="#a0a0a0" stroke-width="1" />
<line x1="544" y1="580" x2="783" y2="580" stroke="#a0a0a0" stroke-width="1" />
<rect x="544" y="581" width="26" height="36" stroke="#ff00ff" stroke-width="1" fill="none" stroke-dasharray="2 2"/>
<rect x="544" y="581" width="33" height="43" stroke="#ff00ff" stroke-width="1" fill="none" stroke-dasharray="2 2"/>
<circle cx="559.5" cy="607.5" r="6" stroke="#00ff00" stroke-width="1" fill="none" />
<rect x="580.7" y="581" width="56" height="26" stroke="#a0a0a0" stroke-width="1" fill="none" />
<path d="M585 586h46l3 12-6 3h-40l-6-3z" stroke="#a0a0a0" stroke-width="1" fill="none" />
<path d="M584 607q5 8 5 18q0 28 19.6 34q19.4-6 19.4-34q0-10 5-18" stroke="#a0a0a0" stroke-width="1" fill="none" />
<path d="M650 601q2-11 13.4-11q11 0 13.3 11q1 2 3 2" stroke="#00ffff" stroke-width="1" fill="none" />
<text x="663.5" y="600" fill="#00ffff" font-size="9" text-anchor="middle" transform="rotate(180 663.5 596)">DR</text>
<line x1="650" y1="588" x2="676.7" y2="588" stroke="#00ffff" stroke-width="1" />
<line x1="663.4" y1="576.6" x2="663.4" y2="588" stroke="#00ffff" stroke-width="1" />
<rect x="668" y="581" width="115" height="66" stroke="#a0a0a0" stroke-width="1" fill="none" />
<rect x="693" y="589" width="63" height="47" stroke="#c0c0c0" stroke-width="1" fill="none" rx="5" stroke-dasharray="2 2"/>
<rect x="696" y="592" width="57" height="41" stroke="#a0a0a0" stroke-width="1" fill="none" rx="4"/>
<line x1="678" y1="603" x2="763.6" y2="603" stroke="#ff0000" stroke-width="1" />
<rect x="762.6" y="582.4" width="20.2" height="10.6" stroke="#00ffff" stroke-width="1" fill="none" />
<text x="765" y="591" fill="#00ffff" font-size="8" transform="translate(765 591) scale(.8 1) translate(-765 -591)">LEB</text>
<path d="M762 603q12 5 14 14q-2 9-14 14M762 607v20M776 617h11.6" stroke="#00ffff" stroke-width="1" fill="none" />
<line x1="649.4" y1="601.6" x2="636" y2="671.6" stroke="#ff0000" stroke-width="1" />
<rect x="632" y="672" width="15" height="13.5" stroke="#00ffff" stroke-width="1" fill="url(#cyhatch2)" />
<circle cx="662.5" cy="678" r="13" stroke="#00ffff" stroke-width="1" fill="none" />
<line x1="653" y1="669" x2="672" y2="688" stroke="#00ffff" stroke-width="1" />
<line x1="653" y1="688" x2="672" y2="669" stroke="#00ffff" stroke-width="1" />
<line x1="686" y1="672" x2="756" y2="672" stroke="#ff0000" stroke-width="1" />
<circle cx="776.2" cy="482" r="6.5" stroke="#00ffff" stroke-width="1" fill="none" />
<line x1="757" y1="482" x2="769.7" y2="482" stroke="#00ffff" stroke-width="1" />
<line x1="757" y1="477.7" x2="757" y2="486.3" stroke="#00ffff" stroke-width="1" />
<circle cx="776" cy="678.5" r="6.5" stroke="#00ffff" stroke-width="1" fill="none" />
<line x1="757" y1="678.5" x2="769.5" y2="678.5" stroke="#00ffff" stroke-width="1" />
<line x1="757" y1="671.6" x2="757" y2="685" stroke="#00ffff" stroke-width="1" />
<line x1="771.5" y1="400" x2="771.5" y2="780" stroke="#ff8080" stroke-width="1" stroke-dasharray="2 2"/>
<line x1="782.8" y1="378" x2="782.8" y2="776" stroke="#00ffff" stroke-width="1" />
<path d="M782.8 461h10.6v217h11v12" stroke="#a0a0a0" stroke-width="1" fill="none" />
<line x1="782.8" y1="690" x2="804.5" y2="690" stroke="#a0a0a0" stroke-width="1" />
<circle cx="790" cy="515" r="2.5" stroke="#a0a0a0" stroke-width="1" fill="none" />
<circle cx="791" cy="545" r="1.5" stroke="#a0a0a0" stroke-width="1" fill="none" />
<circle cx="789" cy="600" r="3" stroke="#a0a0a0" stroke-width="1" fill="none" />
<circle cx="792" cy="650" r="2" stroke="#a0a0a0" stroke-width="1" fill="none" />
<circle cx="788" cy="630" r="1.5" stroke="#a0a0a0" stroke-width="1" fill="none" />
<circle cx="800.3" cy="471.4" r="7" stroke="#00ffff" stroke-width="1" fill="url(#cyhatch)" />
<path d="M805 466l13-15M813 458l5 6M818 451l4 5" stroke="#00ffff" stroke-width="1" fill="none" />
<line x1="788" y1="537" x2="820" y2="525" stroke="#ff0000" stroke-width="1" />
<line x1="788" y1="612" x2="820" y2="595" stroke="#ff0000" stroke-width="1" />
<path d="M703.3 378A79 79 0 0 0 782.4 457" stroke="#00ffff" stroke-width="1" fill="none" />
<rect x="703.3" y="374.4" width="85.4" height="4" stroke="#00ffff" stroke-width="1" fill="none" />
<line x1="782.4" y1="378" x2="782.4" y2="460" stroke="#00ffff" stroke-width="1" />
<path d="M820 303q-10 25-16 38" stroke="#00ffff" stroke-width="1" fill="none" />
<path d="M804 341l20-25" stroke="#00ffff" stroke-width="1" fill="none" />
<line x1="794" y1="452" x2="830" y2="478" stroke="#ff0000" stroke-width="1" />
<circle cx="560.5" cy="719" r="8" stroke="#e0e0e0" stroke-width="1" fill="none" />
<circle cx="560.5" cy="719" r="7" fill="url(#brhatch)"/>
<text x="605" y="716" fill="#fff" font-size="23" transform="translate(605 716) scale(.53 1) translate(-605 -716)">主卫</text>
<circle cx="602.8" cy="738.5" r="9" stroke="#a0a0a0" stroke-width="1" fill="none" />
<circle cx="602.8" cy="738.5" r="3" stroke="#a0a0a0" stroke-width="1" fill="none" />
<line x1="602.8" y1="738" x2="602.8" y2="775" stroke="#a0a0a0" stroke-width="1" />
<line x1="598" y1="775" x2="608" y2="775" stroke="#a0a0a0" stroke-width="1" />
<line x1="614" y1="762" x2="614" y2="776" stroke="#a0a0a0" stroke-width="1" />
<circle cx="614" cy="762" r="3" stroke="#a0a0a0" stroke-width="1" fill="none" />
<line x1="544" y1="765.5" x2="830" y2="765.5" stroke="#ff8080" stroke-width="1" stroke-dasharray="2 2"/>
<line x1="544" y1="777" x2="794" y2="777" stroke="#a0a0a0" stroke-width="1" />
<line x1="544" y1="786.4" x2="794" y2="786.4" stroke="#a0a0a0" stroke-width="1" />
<circle cx="597" cy="782" r="3" stroke="#a0a0a0" stroke-width="1" fill="none" />
<circle cx="638" cy="782" r="3" stroke="#a0a0a0" stroke-width="1" fill="none" />
<circle cx="663" cy="782" r="3" stroke="#a0a0a0" stroke-width="1" fill="none" />
<circle cx="726" cy="782" r="3" stroke="#a0a0a0" stroke-width="1" fill="none" />
<rect x="547" y="787.8" width="247" height="65" stroke="#a0a0a0" stroke-width="1" fill="none" />
<line x1="547" y1="814.6" x2="794" y2="814.6" stroke="#a0a0a0" stroke-width="1" />
<line x1="547" y1="846" x2="620" y2="846" stroke="#a0a0a0" stroke-width="1" />
<line x1="620" y1="849" x2="712" y2="849" stroke="#a0a0a0" stroke-width="1" />
<line x1="712" y1="846" x2="794" y2="846" stroke="#a0a0a0" stroke-width="1" />
<path d="M568 793l1 47M570.5 793l1 47" stroke="#a0a0a0" stroke-width="1" fill="none" />
<path d="M577 793l0 47M579.5 793l0 47" stroke="#a0a0a0" stroke-width="1" fill="none" />
<path d="M600 793l-4 47M602.5 793l-4 47" stroke="#a0a0a0" stroke-width="1" fill="none" />
<path d="M620 793l-4 47M622.5 793l-4 47" stroke="#a0a0a0" stroke-width="1" fill="none" />
<path d="M633 793l1 47M635.5 793l1 47" stroke="#a0a0a0" stroke-width="1" fill="none" />
<path d="M646 793l0 47M648.5 793l0 47" stroke="#a0a0a0" stroke-width="1" fill="none" />
<path d="M657 793l0 47M659.5 793l0 47" stroke="#a0a0a0" stroke-width="1" fill="none" />
<path d="M671 793l1 47M673.5 793l1 47" stroke="#a0a0a0" stroke-width="1" fill="none" />
<path d="M682 793l1 47M684.5 793l1 47" stroke="#a0a0a0" stroke-width="1" fill="none" />
<path d="M712 793l-4 47M714.5 793l-4 47" stroke="#a0a0a0" stroke-width="1" fill="none" />
<path d="M730 793l-4 47M732.5 793l-4 47" stroke="#a0a0a0" stroke-width="1" fill="none" />
<rect x="544" y="881" width="43" height="54" stroke="#a0a0a0" stroke-width="1" fill="none" />
<circle cx="561" cy="907" r="14" stroke="#a0a0a0" stroke-width="1" fill="none" />
<circle cx="561" cy="907" r="7" stroke="#a0a0a0" stroke-width="1" fill="none" />
<path d="M560 893a13 13 0 0 0 0 28z" stroke="#00ffff" stroke-width="1" fill="url(#cyhatch)" />
<line x1="538" y1="903" x2="565" y2="903" stroke="#00ffff" stroke-width="1" />
<line x1="552" y1="889" x2="552" y2="921" stroke="#00ffff" stroke-width="1" />
<line x1="544" y1="937.5" x2="770" y2="937.5" stroke="#a0a0a0" stroke-width="1" />
<line x1="547" y1="937.5" x2="547" y2="990" stroke="#a0a0a0" stroke-width="1" />
<line x1="614" y1="937.5" x2="614" y2="990" stroke="#a0a0a0" stroke-width="1" />
<path d="M563 990v-37q0-8 10-9h28q10 1 10 9v37" stroke="#a0a0a0" stroke-width="1" fill="none" />
<path d="M641 940l-4 50M641 940q5 40 40 45" stroke="#a0a0a0" stroke-width="1" fill="none" />
<line x1="662.5" y1="678" x2="721" y2="990" stroke="#ffc0cb" stroke-width="3" />
<line x1="660" y1="678" x2="719" y2="990" stroke="#ff0000" stroke-width="1" />
<line x1="560" y1="905" x2="703" y2="953" stroke="#ff0000" stroke-width="1" />
<line x1="723" y1="962" x2="780" y2="990" stroke="#ff0000" stroke-width="1" />
<text x="714" y="716" fill="#ffc0cb" font-size="14" transform="translate(714 716) scale(.7 1) translate(-714 -716)" letter-spacing="2">7131</text>
<line x1="713" y1="718" x2="743" y2="718" stroke="#ffc0cb" stroke-width="1" />
<line x1="715" y1="720" x2="657" y2="673.5" stroke="#ffc0cb" stroke-width="1" />
<path d="M704 773.6A79 79 0 0 1 783 694.6" stroke="#00ffff" stroke-width="1" fill="none" />
<rect x="704" y="773.6" width="84" height="4" stroke="#00ffff" stroke-width="1" fill="none" />
<line x1="782.4" y1="690" x2="782.4" y2="773.6" stroke="#00ffff" stroke-width="1" />
<line x1="820" y1="145" x2="894" y2="113" stroke="#ff0000" stroke-width="1" />
<path d="M896 102h9.6v24.5h-11.5q0-12 1.9-24.5z" stroke="#00ffff" stroke-width="1" fill="url(#cyhatch2)" />
<line x1="890" y1="126" x2="897" y2="126" stroke="#00ffff" stroke-width="1" />
<line x1="905.5" y1="101" x2="905.5" y2="126" stroke="#00ffff" stroke-width="1" />
<line x1="895" y1="113" x2="918" y2="113" stroke="#00ffff" stroke-width="1" />
<line x1="904.5" y1="126" x2="904.5" y2="267" stroke="#ff0000" stroke-width="1" />
<line x1="904.5" y1="267" x2="1082" y2="267" stroke="#ff0000" stroke-width="1" />
<line x1="1105" y1="267" x2="1150" y2="267" stroke="#ff0000" stroke-width="1" />
<line x1="1178" y1="267" x2="1212" y2="267" stroke="#ff0000" stroke-width="1" />
<rect x="913.6" y="101" width="21.4" height="131" stroke="none" stroke-width="0" fill="#808080" />
<line x1="913.5" y1="101" x2="913.5" y2="990" stroke="#a0a0a0" stroke-width="1" />
<line x1="935.5" y1="101" x2="935.5" y2="990" stroke="#a0a0a0" stroke-width="1" />
<rect x="913.5" y="232" width="22" height="64" stroke="#a0a0a0" stroke-width="1" fill="none" />
<line x1="1000" y1="101" x2="1000" y2="140" stroke="#a0a0a0" stroke-width="1" />
<rect x="935" y="140" width="70.5" height="70" stroke="#a0a0a0" stroke-width="1" fill="none" />
<line x1="996" y1="140" x2="996" y2="210" stroke="#a0a0a0" stroke-width="1" />
<rect x="935" y="210" width="70.5" height="22" stroke="#a0a0a0" stroke-width="1" fill="none" />
<circle cx="978.3" cy="216" r="6" stroke="#a0a0a0" stroke-width="1" fill="none" />
<circle cx="944" cy="227" r="3.5" stroke="#a0a0a0" stroke-width="1" fill="none" />
<circle cx="962" cy="222" r="1" stroke="#a0a0a0" stroke-width="1" fill="none" />
<circle cx="955" cy="212" r="2" stroke="#a0a0a0" stroke-width="1" fill="none" />
<path d="M930 107.8h18M942 101v21M942 107q10 2 13 15" stroke="#00ffff" stroke-width="1" fill="none" />
<path d="M946 101q6 0 6 5t-6 5" stroke="#00ffff" stroke-width="1" fill="none" />
<line x1="943.3" y1="120.6" x2="943.3" y2="187.4" stroke="#ff0000" stroke-width="1" />
<path d="M956.7 187.4q-13.4 0-13.4 13.8t13.4 12.8" stroke="#00ffff" stroke-width="1" fill="none" />
<line x1="930" y1="201.2" x2="943.3" y2="201.2" stroke="#00ffff" stroke-width="1" />
<line x1="943.3" y1="187" x2="943.3" y2="215" stroke="#00ffff" stroke-width="1" />
<text x="0" y="0" fill="#00ffff" font-size="10" transform="translate(948 197) rotate(90)">B</text>
<line x1="956.7" y1="187.4" x2="1082" y2="174" stroke="#ff0000" stroke-width="1" />
<line x1="1020" y1="101" x2="1082" y2="165" stroke="#ff0000" stroke-width="1" />
<line x1="1093" y1="101" x2="1093" y2="292" stroke="#ffc0cb" stroke-width="2" />
<line x1="1105" y1="172" x2="1212" y2="159.5" stroke="#ff0000" stroke-width="1" />
<line x1="1005" y1="210.5" x2="1180" y2="210.5" stroke="#00ffff" stroke-width="1" />
<line x1="1005" y1="221" x2="1180" y2="221" stroke="#00ffff" stroke-width="1" />
<line x1="1005" y1="222.5" x2="1180" y2="222.5" stroke="#00ffff" stroke-width="1" />
<line x1="1005" y1="225" x2="1060" y2="225" stroke="#00ffff" stroke-width="1" />
<line x1="1030" y1="220" x2="1060" y2="220" stroke="#00ffff" stroke-width="1" />
<line x1="1090" y1="219" x2="1120" y2="219" stroke="#00ffff" stroke-width="1" />
<line x1="1005" y1="232" x2="1212" y2="232" stroke="#ff8080" stroke-width="1" stroke-dasharray="2 2"/>
<text x="1148" y="209" fill="#ffc0cb" font-size="10" >1666</text>
<line x1="1146" y1="211" x2="1172" y2="211" stroke="#ffc0cb" stroke-width="1" />
<line x1="1172" y1="211" x2="1190" y2="230" stroke="#ffc0cb" stroke-width="1" />
<text x="1010" y="255" fill="#00ff00" font-size="17" transform="translate(1010 255) scale(.7 1) translate(-1010 -255)">k3</text>
<line x1="1190" y1="232" x2="1145" y2="300" stroke="#ffc0cb" stroke-width="2.5" />
<line x1="1185" y1="230" x2="1140" y2="297" stroke="#ff0000" stroke-width="1" />
<circle cx="1192" cy="238" r="7" stroke="#00ffff" stroke-width="1" fill="url(#cyhatch)" />
<circle cx="1205" cy="238" r="7" stroke="#00ffff" stroke-width="1" fill="none" />
<line x1="1200" y1="245" x2="1200" y2="258" stroke="#00ffff" stroke-width="1" />
<line x1="1193" y1="258" x2="1207" y2="258" stroke="#00ffff" stroke-width="1" />
<line x1="1104" y1="189" x2="1212" y2="297" stroke="#ff0000" stroke-width="1" />
<line x1="1185.5" y1="101" x2="1185.5" y2="211" stroke="#a0a0a0" stroke-width="1" />
<path d="M1190.4 101v84q0 5 5 5h17M1193 101v77q0 5 5 5h14" stroke="#a0a0a0" stroke-width="1" fill="none" stroke-dasharray="2 2"/>
<path d="M1198 103v73h14" stroke="#a0a0a0" stroke-width="1" fill="none" stroke-dasharray="2 2"/>
<circle cx="1201.5" cy="133.3" r="3" stroke="#a0a0a0" stroke-width="1" fill="none" />
<circle cx="1201.5" cy="143.7" r="3" stroke="#a0a0a0" stroke-width="1" fill="none" />
<circle cx="1201.5" cy="133.3" r="1" stroke="#a0a0a0" stroke-width="1" fill="none" />
<circle cx="1201.5" cy="143.7" r="1" stroke="#a0a0a0" stroke-width="1" fill="none" />
<rect x="1180.4" y="210.6" width="31.6" height="21.4" stroke="#a0a0a0" stroke-width="1" fill="none" />
<circle cx="1206" cy="228" r="4" stroke="#a0a0a0" stroke-width="1" fill="none" />
<path d="M830 292q30-28 73-30" stroke="#00ffff" stroke-width="1" fill="none" />
<line x1="902" y1="262" x2="902" y2="292" stroke="#00ffff" stroke-width="1" />
<line x1="898" y1="262" x2="898" y2="292" stroke="#00ffff" stroke-width="1" />
<circle cx="924" cy="239" r="2.5" stroke="#a0a0a0" stroke-width="1" fill="none" />
<circle cx="924" cy="259" r="4" stroke="#a0a0a0" stroke-width="1" fill="none" />
<circle cx="932" cy="276" r="3" stroke="#a0a0a0" stroke-width="1" fill="none" />
<circle cx="926" cy="290" r="1" stroke="#a0a0a0" stroke-width="1" fill="none" />
<line x1="1142" y1="361" x2="1212" y2="315" stroke="#ffc0cb" stroke-width="2.5" />
<line x1="1142" y1="414" x2="1212" y2="469" stroke="#ffc0cb" stroke-width="2.5" />
<text x="1148" y="343" fill="#00ff00" font-size="17" transform="translate(1148 343) scale(.75 1) translate(-1148 -343)">n1</text>
<line x1="1150" y1="405" x2="1212" y2="384" stroke="#ff0000" stroke-width="1" />
<line x1="1167" y1="421" x2="1212" y2="400" stroke="#ff0000" stroke-width="1" />
<line x1="1142" y1="508" x2="1182" y2="462" stroke="#ff0000" stroke-width="1" />
<line x1="1195" y1="444" x2="1212" y2="428" stroke="#ff0000" stroke-width="1" />
<line x1="1212" y1="488" x2="1109" y2="760" stroke="#ff0000" stroke-width="1" />
<rect x="1142" y="611" width="14" height="31" stroke="#a0a0a0" stroke-width="1" fill="none" />
<line x1="1142" y1="290" x2="1160" y2="280" stroke="#ff0000" stroke-width="1" />
<path d="M804.4 687.8A93.4 93.4 0 0 0 897.8 781.2" stroke="#00ffff" stroke-width="1" fill="none" />
<line x1="897.8" y1="722" x2="897.8" y2="781" stroke="#00ffff" stroke-width="1" />
<line x1="901.5" y1="722" x2="901.5" y2="781" stroke="#00ffff" stroke-width="1" />
<line x1="897.8" y1="781" x2="901.5" y2="781" stroke="#00ffff" stroke-width="1" />
<line x1="830" y1="765.6" x2="914" y2="765.6" stroke="#ff8080" stroke-width="1" stroke-dasharray="2 2"/>
<line x1="830" y1="787" x2="914" y2="787" stroke="#ff8080" stroke-width="1" stroke-dasharray="2 2"/>
<circle cx="924" cy="726" r="4" stroke="#a0a0a0" stroke-width="1" fill="none" />
<circle cx="920" cy="762" r="3" stroke="#a0a0a0" stroke-width="1" fill="none" />
<circle cx="924" cy="783" r="4" stroke="#a0a0a0" stroke-width="1" fill="none" />
<circle cx="918" cy="830" r="2" stroke="#a0a0a0" stroke-width="1" fill="none" />
<circle cx="926" cy="860" r="3" stroke="#a0a0a0" stroke-width="1" fill="none" />
<rect x="913.5" y="885.7" width="22" height="104.3" stroke="none" stroke-width="0" fill="#808080" />
<line x1="912.5" y1="795" x2="803" y2="937.5" stroke="#ffc0cb" stroke-width="3" />
<line x1="909" y1="793" x2="800" y2="935" stroke="#ff0000" stroke-width="1" />
<text x="928" y="798" fill="#ffc0cb" font-size="9" >2762</text>
<line x1="915" y1="798" x2="947" y2="800" stroke="#ffc0cb" stroke-width="1" />
<ellipse cx="906.8" cy="797" rx="5" ry="7" transform="rotate(40 906.8 797)" stroke="#00ffff" fill="url(#cyhatch)"/>
<path d="M893 805l-8 10 5 5 8-10" stroke="#00ffff" stroke-width="1" fill="none" />
<line x1="961" y1="723" x2="780" y2="939" stroke="#ff0000" stroke-width="1" />
<rect x="935" y="812" width="33" height="178" stroke="#a0a0a0" stroke-width="1" fill="none" />
<line x1="935" y1="845.6" x2="968" y2="845.6" stroke="#a0a0a0" stroke-width="1" />
<rect x="948" y="884" width="12" height="106" stroke="#a0a0a0" stroke-width="1" fill="none" />
<rect x="942" y="890" width="8" height="100" stroke="#a0a0a0" stroke-width="1" fill="none" />
<rect x="1005.5" y="787.8" width="206.5" height="202" stroke="#a0a0a0" stroke-width="1" fill="none" />
<rect x="1010" y="793" width="8" height="197" stroke="#a0a0a0" stroke-width="1" fill="none" stroke-dasharray="2 2"/>
<line x1="1018" y1="798" x2="1212" y2="798" stroke="#a0a0a0" stroke-width="1" />
<path d="M1103 845v-60q0-22 22-22h60q22 0 22 22v60q0-8-6-8h-8v-46q0-8-8-8h-54q-8 0-8 8v46h-12q-8 0-8 8z" stroke="#a0a0a0" stroke-width="1" fill="none" />
<rect x="1115" y="837" width="80" height="8" stroke="#a0a0a0" stroke-width="1" fill="none" />
<line x1="1124" y1="723" x2="1042" y2="939" stroke="#ff0000" stroke-width="1" />
<line x1="1062" y1="916" x2="1163" y2="881" stroke="#ff0000" stroke-width="1" />
<text x="1134" y="737" fill="#00ff00" font-size="17" transform="translate(1134 737) scale(.7 1) translate(-1134 -737)">k1</text>
<line x1="1212" y1="850" x2="1144" y2="937.5" stroke="#ffc0cb" stroke-width="3" />
<line x1="1212" y1="830" x2="1140" y2="930" stroke="#ff0000" stroke-width="1" />
<rect x="1170" y="887" width="42" height="103" stroke="#a0a0a0" stroke-width="1" fill="none" />
<line x1="1178" y1="887" x2="1178" y2="990" stroke="#a0a0a0" stroke-width="1" />
<path d="M1127 945a10 10 0 0 1 20 0" stroke="#00ffff" stroke-width="1" fill="none" />
<line x1="1212" y1="940" x2="1060" y2="990" stroke="#ff0000" stroke-width="1" />
<rect x="1838.6" y="192" width="21.8" height="89.4" stroke="#a0a0a0" stroke-width="1" fill="none" />
<circle cx="1852" cy="205" r="4.5" stroke="#a0a0a0" stroke-width="1" fill="none" />
<circle cx="1843" cy="228" r="2" stroke="#a0a0a0" stroke-width="1" fill="none" />
<circle cx="1858" cy="260" r="3" stroke="#a0a0a0" stroke-width="1" fill="none" />
<circle cx="1857" cy="278" r="3" stroke="#a0a0a0" stroke-width="1" fill="none" />
<circle cx="1878" cy="211" r="5.5" stroke="#a0a0a0" stroke-width="1" fill="none" />
<circle cx="1892" cy="200" r="2.5" stroke="#a0a0a0" stroke-width="1" fill="none" />
<circle cx="1902" cy="196" r="2" stroke="#a0a0a0" stroke-width="1" fill="none" />
<line x1="1860.4" y1="199.6" x2="1906" y2="199.6" stroke="#a0a0a0" stroke-width="1" />
<line x1="1860.4" y1="221.5" x2="1906" y2="221.5" stroke="#a0a0a0" stroke-width="1" />
<line x1="1860.4" y1="192" x2="1860.4" y2="199.6" stroke="#a0a0a0" stroke-width="1" />
<rect x="1839" y="250.3" width="15.7" height="15.3" stroke="#ff00ff" stroke-width="1" fill="none" />
<line x1="1840" y1="262" x2="1853" y2="253" stroke="#e08080" stroke-width="1" />
<line x1="1843" y1="265" x2="1854" y2="258" stroke="#e08080" stroke-width="1" />
<line x1="1839" y1="258" x2="1848" y2="251" stroke="#e08080" stroke-width="1" />
<text x="0" y="0" fill="#aaa" font-size="10" transform="translate(1827 252) rotate(90)">D10</text>
<line x1="1838.5" y1="281.4" x2="1838.5" y2="401" stroke="#00ffff" stroke-width="1" />
<line x1="1860.5" y1="221.5" x2="1860.5" y2="281.4" stroke="#a0a0a0" stroke-width="1" />
<line x1="1860.5" y1="281.4" x2="1860.5" y2="401" stroke="#00ffff" stroke-width="1" />
<rect x="1864" y="277" width="3" height="60.8" stroke="#00ffff" stroke-width="1" fill="none" />
<rect x="1864" y="345" width="3" height="60.5" stroke="#00ffff" stroke-width="1" fill="none" />
<rect x="1884.7" y="248.3" width="30" height="174.7" stroke="#ffff00" stroke-width="1" fill="none" />
<line x1="1886" y1="250" x2="1906" y2="272" stroke="#ffff00" stroke-width="1" />
<line x1="1887" y1="423" x2="1906" y2="398" stroke="#ffff00" stroke-width="1" />
<rect x="1838.3" y="401" width="22.2" height="81.5" stroke="none" stroke-width="0" fill="#808080" />
<rect x="1860.5" y="461.5" width="45.5" height="21" stroke="none" stroke-width="0" fill="#808080" />
<circle cx="1822" cy="444.4" r="6" stroke="#ff0000" stroke-width="1" fill="none" />
<path d="M1748 461.5h69v21z" stroke="#ff0000" stroke-width="1" fill="#ff0000" />
<line x1="1748" y1="482" x2="1817" y2="482" stroke="#ff0000" stroke-width="1" />
<line x1="1748" y1="461.5" x2="1838" y2="461.5" stroke="#a0a0a0" stroke-width="1" />
<line x1="1748" y1="493.3" x2="1838" y2="493.3" stroke="#a0a0a0" stroke-width="1" />
<circle cx="1772" cy="475" r="4.5" stroke="#a0a0a0" stroke-width="1" fill="none" />
<circle cx="1786" cy="466" r="2" stroke="#a0a0a0" stroke-width="1" fill="none" />
<circle cx="1754" cy="473" r="2" stroke="#a0a0a0" stroke-width="1" fill="none" />
<circle cx="1826" cy="478" r="4.5" stroke="#a0a0a0" stroke-width="1" fill="none" />
<circle cx="1795" cy="488" r="2.5" stroke="#a0a0a0" stroke-width="1" fill="none" />
<circle cx="1816" cy="478" r="2.5" stroke="#a0a0a0" stroke-width="1" fill="none" />
<line x1="1860.5" y1="482.5" x2="1860.5" y2="560" stroke="#a0a0a0" stroke-width="1" />
<line x1="1838" y1="493.3" x2="1838" y2="560" stroke="#ff00ff" stroke-width="1" stroke-dasharray="2 2"/>
<rect x="1860.5" y="483" width="45.5" height="10" stroke="none" stroke-width="0" fill="url(#mghatch2)" />
<circle cx="1867" cy="535.5" r="7" stroke="#00ffff" stroke-width="1" fill="url(#cyhatch)" />
<line x1="1867" y1="535.5" x2="1906" y2="528" stroke="#a0a0a0" stroke-width="1" />
<line x1="1867" y1="540" x2="1890" y2="570" stroke="#00ffff" stroke-width="1" />
<circle cx="1849" cy="520" r="2" stroke="#a0a0a0" stroke-width="1" fill="none" />
<circle cx="1846" cy="545" r="2" stroke="#a0a0a0" stroke-width="1" fill="none" />
<rect x="1816.7" y="548.4" width="32.7" height="3.2" stroke="#ffff00" stroke-width="1" fill="none" />
<rect x="1836.8" y="540" width="24.2" height="8.4" stroke="#a0a0a0" stroke-width="1" fill="none" />
<line x1="1837" y1="540" x2="1837" y2="548" stroke="#ff00ff" stroke-width="1" />
<path d="M1817 552q5 26 32 28.5" stroke="#ffff00" stroke-width="1" fill="none" />
<path d="M1849 580.5A97 97 0 0 0 1752 677" stroke="#ffff00" stroke-width="1" fill="none" />
<path d="M1849 580.5l-10-3" stroke="#ffff00" stroke-width="1" fill="none" />
<line x1="1751" y1="675" x2="1849" y2="675" stroke="#ffff00" stroke-width="1" />
<line x1="1751" y1="678" x2="1849" y2="678" stroke="#ffff00" stroke-width="1" />
<line x1="1748" y1="689.4" x2="1816.7" y2="689.4" stroke="#ffff00" stroke-width="1" />
<line x1="1748" y1="711.4" x2="1816.7" y2="711.4" stroke="#ffff00" stroke-width="1" />
<path d="M1748 681l12-11 13 30 13-30 30 30" stroke="#ffff00" stroke-width="1" fill="none" />
<path d="M1816.7 689.4h20.1v-11.4h24.2v11.4h32.8v22h-10.8v161.3M1816.7 689.4v22h41.1v74.3" stroke="#a0a0a0" stroke-width="1" fill="none" />
<line x1="1837" y1="678" x2="1837" y2="689" stroke="#ff00ff" stroke-width="1" />
<circle cx="1848" cy="690" r="3.5" stroke="#a0a0a0" stroke-width="1" fill="none" />
<circle cx="1871" cy="696" r="2" stroke="#a0a0a0" stroke-width="1" fill="none" />
<circle cx="1833" cy="706" r="1.5" stroke="#a0a0a0" stroke-width="1" fill="none" />
<circle cx="1872" cy="717" r="3.5" stroke="#a0a0a0" stroke-width="1" fill="none" />
<circle cx="1873" cy="735" r="2.5" stroke="#a0a0a0" stroke-width="1" fill="none" />
<circle cx="1878" cy="754" r="3" stroke="#a0a0a0" stroke-width="1" fill="none" />
<text x="1872.6" y="649.8" fill="#fff" font-size="20" transform="translate(1872.6 649.8) scale(.6 1) translate(-1872.6 -649.8)">玄关</text>
<circle cx="1888.4" cy="720.5" r="7" stroke="#00ffff" stroke-width="1" fill="url(#cyhatch)" />
<line x1="1888" y1="715" x2="1906" y2="700" stroke="#00ffff" stroke-width="1" />
<line x1="1889" y1="726" x2="1906" y2="750" stroke="#ff0000" stroke-width="1" />
<line x1="1895" y1="705" x2="1906" y2="715" stroke="#00ffff" stroke-width="1" />
<rect x="1748" y="711.4" width="110.7" height="74.2" stroke="#ff00ff" stroke-width="1.5" fill="none" />
<text x="1752" y="768" fill="#fff" font-size="20" transform="translate(1752 768) scale(.62 1) translate(-1752 -768)">水暖井</text>
<line x1="1748" y1="809.5" x2="1882.7" y2="809.5" stroke="#a0a0a0" stroke-width="1" />
<circle cx="1754" cy="793" r="4.5" stroke="#a0a0a0" stroke-width="1" fill="none" />
<circle cx="1774" cy="789" r="2" stroke="#a0a0a0" stroke-width="1" fill="none" />
<circle cx="1780" cy="800" r="2.5" stroke="#a0a0a0" stroke-width="1" fill="none" />
<circle cx="1793" cy="805" r="6.5" stroke="#a0a0a0" stroke-width="1" fill="none" />
<circle cx="1818" cy="793" r="4.5" stroke="#a0a0a0" stroke-width="1" fill="none" />
<circle cx="1846" cy="799" r="2.5" stroke="#a0a0a0" stroke-width="1" fill="none" />
<circle cx="1862" cy="805" r="6" stroke="#a0a0a0" stroke-width="1" fill="none" />
<rect x="1748" y="809.5" width="131" height="63.5" stroke="#a0a0a0" stroke-width="1" fill="none" />
<line x1="1748" y1="836" x2="1879" y2="836" stroke="#a0a0a0" stroke-width="1" />
<line x1="1748" y1="838.5" x2="1879" y2="838.5" stroke="#a0a0a0" stroke-width="1" />
<line x1="1752" y1="870" x2="1879" y2="870" stroke="#a0a0a0" stroke-width="1" />
<path d="M1752 815l2 47M1755 815l-1 47" stroke="#a0a0a0" stroke-width="1" fill="none" />
<path d="M1763 815l2 47M1766 815l-1 47" stroke="#a0a0a0" stroke-width="1" fill="none" />
<path d="M1775 815l2 47M1778 815l-1 47" stroke="#a0a0a0" stroke-width="1" fill="none" />
<path d="M1781 815l2 47M1784 815l-1 47" stroke="#a0a0a0" stroke-width="1" fill="none" />
<path d="M1792 815l2 47M1795 815l-1 47" stroke="#a0a0a0" stroke-width="1" fill="none" />
<path d="M1798 815l2 47M1801 815l-1 47" stroke="#a0a0a0" stroke-width="1" fill="none" />
<path d="M1820 815l2 47M1823 815l-1 47" stroke="#a0a0a0" stroke-width="1" fill="none" />
<path d="M1835 815l2 47M1838 815l-1 47" stroke="#a0a0a0" stroke-width="1" fill="none" />
<text x="1864.7" y="905.5" fill="#00ff00" font-size="22" transform="translate(1864.7 905.5) scale(.6 1) translate(-1864.7 -905.5)">k2</text>
<line x1="1748" y1="920" x2="1878" y2="976" stroke="#ff0000" stroke-width="1" />
<line x1="1906" y1="884" x2="1863.5" y2="952" stroke="#ff0000" stroke-width="1" />
<line x1="1906" y1="934" x2="1885" y2="990" stroke="#ff0000" stroke-width="1" />
<line x1="1851.5" y1="971.4" x2="1840" y2="990" stroke="#ff0000" stroke-width="1" />
<line x1="1748" y1="946.3" x2="1906" y2="946.3" stroke="#a0a0a0" stroke-width="1" />
<path d="M1748 948h12q8 2 8 12v30M1768 948l7 42M1768 948l32 42" stroke="#a0a0a0" stroke-width="1" fill="none" />
<rect x="1250" y="101" width="23" height="50" stroke="none" stroke-width="0" fill="#808080" />
<line x1="1274" y1="101" x2="1274" y2="151" stroke="#ff00ff" stroke-width="1" stroke-dasharray="2 2"/>
<line x1="1274" y1="109.3" x2="1396" y2="109.3" stroke="#a0a0a0" stroke-width="1" />
<line x1="1420" y1="109.3" x2="1545" y2="109.3" stroke="#a0a0a0" stroke-width="1" />
<line x1="1274" y1="136.9" x2="1396" y2="136.9" stroke="#a0a0a0" stroke-width="1" />
<line x1="1420" y1="136.9" x2="1545" y2="136.9" stroke="#a0a0a0" stroke-width="1" />
<line x1="1337.7" y1="101" x2="1337.7" y2="151" stroke="#a0a0a0" stroke-width="1" />
<line x1="1479.4" y1="101" x2="1479.4" y2="151" stroke="#a0a0a0" stroke-width="1" />
<line x1="1545" y1="101" x2="1545" y2="151" stroke="#a0a0a0" stroke-width="1" />
<line x1="1566" y1="101" x2="1566" y2="151" stroke="#a0a0a0" stroke-width="1" />
<path d="M1396.5 151V103.5h23v47.5M1404.5 151v-41.5h9v41.5" stroke="#a0a0a0" stroke-width="1" fill="none" />
<circle cx="1361" cy="117" r="0" stroke="#a0a0a0" stroke-width="1" fill="none" />
<circle cx="1553" cy="103" r="3" stroke="#a0a0a0" stroke-width="1" fill="none" />
<circle cx="1558" cy="140" r="4.5" stroke="#a0a0a0" stroke-width="1" fill="none" />
<circle cx="1552" cy="122" r="1" stroke="#a0a0a0" stroke-width="1" fill="none" />
<circle cx="1218" cy="117.3" r="10" stroke="#999" stroke-width="1" fill="none" />
<circle cx="1218" cy="117.3" r="7" stroke="#999" stroke-width="1" fill="none" />
<circle cx="1218" cy="117.3" r="4.5" stroke="#999" stroke-width="1" fill="none" />
<circle cx="1218" cy="117.3" r="2" stroke="#999" stroke-width="1" fill="none" />
<path d="M1208 110l-3 7 3 7M1228 110l3 7-3 7" stroke="#a0a0a0" stroke-width="1" fill="none" />
<rect x="1235" y="127" width="16.7" height="24" stroke="#00ffff" stroke-width="1" fill="none" />
<line x1="1237.7" y1="101" x2="1237.7" y2="130" stroke="#999" stroke-width="1" stroke-dasharray="2 2"/>
<line x1="1245.4" y1="101" x2="1245.4" y2="130" stroke="#999" stroke-width="1" stroke-dasharray="2 2"/>
<line x1="1249" y1="146" x2="1249" y2="151" stroke="#ff0000" stroke-width="1" />
<path d="M1229 133q6 6 12 10M1227 143h10M1225 146v5" stroke="#00ffff" stroke-width="1" fill="none" />
<circle cx="1214" cy="133" r="2.5" stroke="#a0a0a0" stroke-width="1" fill="none" />
<circle cx="1214" cy="143" r="2.5" stroke="#a0a0a0" stroke-width="1" fill="none" />
<line x1="1250" y1="151" x2="1250" y2="101" stroke="#a0a0a0" stroke-width="1" />
<line x1="1219.7" y1="924" x2="1219.7" y2="990" stroke="#a0a0a0" stroke-width="1" />
<line x1="1225" y1="924" x2="1225" y2="990" stroke="#a0a0a0" stroke-width="1" />
<line x1="1319" y1="924" x2="1319" y2="990" stroke="#a0a0a0" stroke-width="1" />
<line x1="1338.4" y1="924" x2="1338.4" y2="990" stroke="#a0a0a0" stroke-width="1" />
<line x1="1358.6" y1="924" x2="1358.6" y2="990" stroke="#a0a0a0" stroke-width="1" />
<path d="M1249 924v52.8h68" stroke="#a0a0a0" stroke-width="1" fill="none" />
<path d="M1249 976.8l-3 -3M1249 976.8l-3 3" stroke="#a0a0a0" stroke-width="1" fill="none" />
<line x1="1348" y1="924" x2="1356" y2="990" stroke="#ff0000" stroke-width="1" />
<circle cx="1348" cy="956" r="2.5" stroke="#a0a0a0" stroke-width="1" fill="none" />
<circle cx="1347" cy="978" r="3.5" stroke="#a0a0a0" stroke-width="1" fill="none" />
<circle cx="1342" cy="934" r="2" stroke="#a0a0a0" stroke-width="1" fill="none" />
<line x1="1468.6" y1="924" x2="1496" y2="990" stroke="#ffc0cb" stroke-width="2.5" />
<line x1="1474" y1="924" x2="1500" y2="990" stroke="#ff0000" stroke-width="1" />
<line x1="1507.6" y1="967" x2="1520.6" y2="990" stroke="#ff0000" stroke-width="1" />
<text x="1543" y="929" fill="#ffc0cb" font-size="14" transform="translate(1543 929) scale(.7 1) translate(-1543 -929)" letter-spacing="3">4157</text>
<line x1="1540" y1="932" x2="1595" y2="932" stroke="#ffc0cb" stroke-width="1" />
<line x1="1540" y1="932" x2="1528.7" y2="990" stroke="#ffc0cb" stroke-width="1" />
<line x1="1460" y1="946.5" x2="1675" y2="946.5" stroke="#a0a0a0" stroke-width="1" />
<line x1="1700" y1="946.5" x2="1748" y2="946.5" stroke="#a0a0a0" stroke-width="1" />
<path d="M1453 938q8 5 4 9v43" stroke="#a0a0a0" stroke-width="1" fill="none" />
<path d="M1605 990v-34q0-8 10-9q21-2 42 0q10 1 10 9v34" stroke="#a0a0a0" stroke-width="1" fill="none" />
<path d="M1603 948L1573 990M1603 950L1596 990" stroke="#a0a0a0" stroke-width="1" fill="none" />
<rect x="1631" y="924" width="111" height="19.6" stroke="#a0a0a0" stroke-width="1" fill="none" />
<circle cx="1657" cy="927" r="6" stroke="#a0a0a0" stroke-width="1" fill="none" />
<circle cx="1714" cy="927" r="6" stroke="#a0a0a0" stroke-width="1" fill="none" />
<line x1="1657" y1="921" x2="1657" y2="935" stroke="#a0a0a0" stroke-width="1" />
<line x1="1714" y1="921" x2="1714" y2="935" stroke="#a0a0a0" stroke-width="1" />
<line x1="1666" y1="924" x2="1666" y2="990" stroke="#ff0000" stroke-width="1" />
<line x1="1705.4" y1="924" x2="1705.4" y2="990" stroke="#ff0000" stroke-width="1" />
<line x1="1675" y1="946" x2="1675" y2="990" stroke="#a0a0a0" stroke-width="1" />
<line x1="1698" y1="946" x2="1698" y2="990" stroke="#a0a0a0" stroke-width="1" />
<circle cx="1680" cy="955" r="1" stroke="#a0a0a0" stroke-width="1" fill="none" />
<circle cx="1690" cy="970" r="1" stroke="#a0a0a0" stroke-width="1" fill="none" />
<circle cx="1683" cy="985" r="1" stroke="#a0a0a0" stroke-width="1" fill="none" />
<path d="M1720 990v-32q0-8 10-9q15-2 18 0" stroke="#a0a0a0" stroke-width="1" fill="none" />
</g></svg>
</div>
<div id="ltabs" class="a">
<svg class="a" style="left:0;top:0" width="220" height="20"><path d="M1 0L8 18Q9 20 12 20H59Q62 20 63 18L69 0Z" fill="#000"/><path d="M69 1L71 17Q72 19 74 19H126Q129 19 130 17L135 1" fill="#fff" stroke="#333" stroke-width="1"/><path d="M131 1L137 17Q138 19 140 19H192Q195 19 196 17L200 1" fill="#fff" stroke="#333" stroke-width="1"/></svg>
<div class="a" style="left:23px;top:2px;color:#fff;font-size:12px">模型</div>
<div class="a" style="left:87px;top:2px;color:#000;font-size:12px">布局1</div>
<div class="a" style="left:151px;top:2px;color:#000;font-size:12px">布局2</div>
</div>
<div id="status" class="a">
<div class="a" style="left:8px;top:9px;font-family:'Liberation Mono',monospace;font-size:10px;color:#000;white-space:pre">x = -1403751 y = 182480</div>
<div class="a" style="left:495px;top:7px;font-size:12px;color:#000">模型中的标注比例:1</div>
<div class="a" style="left:325px;top:3px;width:1px;height:26px;background:#d8d6d3"></div>
<div class="a" style="left:0;top:29px;width:1906px;height:2px;background:#222"></div>
</div>
<div class="a" style="left:9px;top:101px;width:1px;height:889px;background:#00e5ff"></div>
<div class="a" style="left:145px;top:101px;width:1px;height:889px;background:#00e5ff"></div>
<div class="a" style="left:10px;top:102px;width:130px;height:571px;background:#f0f0f0"></div>
<div class="a" style="left:10px;top:102px;width:130px;height:31px;background:#fff"></div>
<div class="a" style="left:18px;top:109px;font-size:12.5px;color:#a8a8a8">测量</div>
<div class="a" style="left:120px;top:110px;width:19px;height:19px;background:#e2e2e2"></div>
<svg class="a" style="left:126px;top:116px" width="8" height="8"><path d="M1 1l6 6M7 1l-6 6" stroke="#f4f4f4" stroke-width="1"/></svg>
<div class="a lpr" style="top:132.7px"><svg width="17" height="17" viewBox="0 0 17 17"><path d="M2.5 3l11 11M1.5 5.5l3-3M12 15.5l3-3" stroke="#2aa8ee" stroke-width="1.1" fill="none"/><path d="M2.5 3l3.5 1-2.5 2.5zM13.5 14l-3.5-1 2.5-2.5z" fill="#2aa8ee"/></svg><span>对齐</span></div>
<div class="a" style="left:10px;top:159.1px;width:130px;height:1px;background:#a9a9a9"></div>
<div class="a lpr" style="top:159.8px"><svg width="17" height="17" viewBox="0 0 17 17"><path d="M1 5v7M15 5v7M1.5 8.5h13" stroke="#2aa8ee" stroke-width="1.1" fill="none"/><path d="M1.5 8.5l3-2v4zM14.5 8.5l-3-2v4z" fill="#2aa8ee"/></svg><span>线性</span></div>
<div class="a" style="left:10px;top:186.2px;width:130px;height:1px;background:#a9a9a9"></div>
<div class="a lpr" style="top:186.8px"><svg width="17" height="17" viewBox="0 0 17 17"><path d="M2 1v9h13V8L2 1z" fill="none" stroke="#2aa8ee" stroke-width="1.1"/><path d="M3 9l4-5M6 9l4-3.5M9 9l4-2.5" stroke="#2aa8ee" stroke-width=".9"/><path d="M1 11v5M15 11v5M1.5 13.5h13" stroke="#2aa8ee" stroke-width="1.1"/></svg><span>面积</span></div>
<div class="a" style="left:10px;top:213.2px;width:130px;height:1px;background:#a9a9a9"></div>
<div class="a lpr" style="top:213.8px"><svg width="17" height="17" viewBox="0 0 17 17"><rect x="1.5" y="1" width="13" height="9.5" fill="none" stroke="#2aa8ee" stroke-width="1.1"/><path d="M2 8l5-6M5 10l7-8.5M9 10l5-6" stroke="#2aa8ee" stroke-width=".9"/><path d="M.5 12v4.5M15.5 12v4.5M1 14.5h14" stroke="#2aa8ee" stroke-width="1.1"/></svg><span>矩形面积</span></div>
<div class="a" style="left:10px;top:240.2px;width:130px;height:1px;background:#a9a9a9"></div>
<div class="a lpr" style="top:240.9px"><svg width="17" height="17" viewBox="0 0 17 17"><path d="M7 2l2 2M9 2l-2 2M11 3h4M7 6l2 2M9 6l-2 2M11 7h4M1.5 13c2-6 4-8 8-9M2 11v5h3v-3" stroke="#2aa8ee" stroke-width="1" fill="none"/></svg><span>坐标标注</span></div>
<div class="a" style="left:10px;top:267.3px;width:130px;height:1px;background:#a9a9a9"></div>
<div class="a lpr" style="top:267.9px"><svg width="17" height="17" viewBox="0 0 17 17"><text x="8" y="7" text-anchor="middle" font-size="7" font-weight="bold" fill="#2aa8ee" font-family="Liberation Mono">A:B</text><rect x="1" y="9.5" width="14.5" height="5" fill="none" stroke="#2aa8ee" stroke-width="1.1"/><path d="M3.5 9.5v2M6 9.5v2M8.5 9.5v2M11 9.5v2M13.5 9.5v2" stroke="#2aa8ee" stroke-width=".8"/></svg><span>设置标注比例</span></div>
<div class="a" style="left:10px;top:294.3px;width:130px;height:1px;background:#a9a9a9"></div>
<div class="a lpr" style="top:295.0px"><svg width="17" height="17" viewBox="0 0 17 17"><path d="M3 14c0-6 4-11 11-11" fill="none" stroke="#c49a45" stroke-width="1.4"/><circle cx="3" cy="14" r="1.4" fill="#c49a45"/><circle cx="14" cy="3" r="1.4" fill="#c49a45"/><path d="M6 14c0-4 3-7 7-7" fill="none" stroke="#c49a45" stroke-width="1"/><path d="M5 12l1.5 2.5L8 12zM12 6l2.5 1.5-2.5 1.5z" fill="#c49a45"/></svg><span>弧长</span></div>
<div class="a" style="left:10px;top:321.4px;width:130px;height:1px;background:#a9a9a9"></div>
<div class="a lpr" style="top:322.0px"><svg width="17" height="17" viewBox="0 0 17 17"><circle cx="2" cy="3" r="1.5" fill="#c49a45"/><path d="M2 3l7 5M15 4L4 15M6.5 6.5l2 3" stroke="#c49a45" stroke-width="1.2" fill="none"/></svg><span>点到直线的距离</span></div>
<div class="a" style="left:10px;top:348.4px;width:130px;height:1px;background:#a9a9a9"></div>
<div class="a lpr" style="top:349.1px"><svg width="17" height="17" viewBox="0 0 17 17"><circle cx="5" cy="3" r="1.6" fill="#c49a45"/><circle cx="3" cy="10" r="1.6" fill="#c49a45"/><circle cx="9.5" cy="13" r="1.6" fill="#c49a45"/><circle cx="13.5" cy="13" r="1.6" fill="#c49a45"/><path d="M5 3L3 10l6.5 3h4" stroke="#c49a45" stroke-width="1.2" fill="none"/></svg><span>连续测量</span></div>
<div class="a" style="left:10px;top:375.5px;width:130px;height:1px;background:#a9a9a9"></div>
<div class="a lpr" style="top:376.1px"><svg width="17" height="17" viewBox="0 0 17 17"><rect x="1.5" y="1.5" width="13" height="13" fill="none" stroke="#c49a45" stroke-width="1.4" stroke-dasharray="2.2 1.4"/><path d="M5 12c0-4 2-7 6-7M4 11l1 2 1.5-2M10 4l2 1-2 1.5" stroke="#c49a45" stroke-width="1" fill="none"/></svg><span>批量测量</span></div>
<div class="a" style="left:10px;top:402.5px;width:130px;height:1px;background:#a9a9a9"></div>
<div class="a lpr" style="top:403.2px"><svg width="17" height="17" viewBox="0 0 17 17"><path d="M1.5 8L5 3l2 2" stroke="#c49a45" stroke-width="1.3" fill="none"/><circle cx="2" cy="8.5" r="1.5" fill="#c49a45"/><circle cx="5.5" cy="13" r="1.5" fill="#c49a45"/><path d="M2 8.5l3.5 4.5" stroke="#c49a45" stroke-width="1.2"/><rect x="7.5" y="3" width="8" height="10" fill="none" stroke="#c49a45" stroke-width="1.2"/><path d="M9.5 6h4M9.5 8.5h4M9.5 11h4" stroke="#c49a45" stroke-width="1"/></svg><span>查看分段长度</span></div>
<div class="a" style="left:10px;top:429.6px;width:130px;height:1px;background:#a9a9a9"></div>
<div class="a lpr" style="top:430.2px"><svg width="17" height="17" viewBox="0 0 17 17"><path d="M1 8.5l6-6 7 6-6 6z" fill="none" stroke="#c49a45" stroke-width="1.3"/><path d="M4.5 8.5l3-3 3.5 3-3 3z" fill="none" stroke="#c49a45" stroke-width="1"/><path d="M9 9l5-6" stroke="#c49a45" stroke-width="1.5"/></svg><span>修改单个标注属性</span></div>
<div class="a" style="left:10px;top:456.6px;width:130px;height:1px;background:#a9a9a9"></div>
<div class="a lpr" style="top:457.3px"><svg width="17" height="17" viewBox="0 0 17 17"><path d="M2 12c-1-5 2-10 7-10 5 0 7 2 6 6-1 4-4 6-9 6-2 0-3-.5-4-2z" fill="none" stroke="#c49a45" stroke-width="1.4"/><path d="M3.5 11L10 4M6 13l7-7" stroke="#c49a45" stroke-width="1.1"/></svg><span>面积(含弧线)</span></div>
<div class="a" style="left:10px;top:483.7px;width:130px;height:1px;background:#a9a9a9"></div>
<div class="a lpr" style="top:484.4px"><svg width="17" height="17" viewBox="0 0 17 17"><path d="M2 12c-1-5 2-10 7-10 5 0 7 2 6 6-1 4-4 6-9 6-2 0-3-.5-4-2z" fill="none" stroke="#c49a45" stroke-width="1.4"/><path d="M5 10c0-3 2-4.5 4-4.5s3 1 2.5 3c-.5 2-2 3-4 3-1.5 0-2.5-.5-2.5-1.5z" fill="none" stroke="#c49a45" stroke-width="1.1"/><path d="M3 10l3-2M10 11l4-3M6 4l3 1" stroke="#c49a45" stroke-width=".9"/></svg><span>测量填充面积</span></div>
<div class="a" style="left:10px;top:510.8px;width:130px;height:1px;background:#a9a9a9"></div>
<div class="a lpr" style="top:511.4px"><svg width="17" height="17" viewBox="0 0 17 17"><path d="M2 5l3-3h10v10l-3 3H2z M2 5h10v10M12 5l3-3" fill="none" stroke="#c49a45" stroke-width="1.2"/><path d="M3 10l5-5M4 14l7-7" stroke="#c49a45" stroke-width="1"/></svg><span>计算侧面积</span></div>
<div class="a" style="left:10px;top:537.8px;width:130px;height:1px;background:#a9a9a9"></div>
<div class="a lpr" style="top:538.5px"><svg width="17" height="17" viewBox="0 0 17 17"><path d="M1.5 1.5L15 4l-1 9-10 2z" fill="none" stroke="#c49a45" stroke-width="1.3"/><path d="M4.5 4.5l8 2-.5 5-6 1z" fill="none" stroke="#c49a45" stroke-width="1"/><path d="M6 10l4-3M7 12l4-3" stroke="#c49a45" stroke-width=".8"/></svg><span>面积偏移</span></div>
<div class="a" style="left:10px;top:564.9px;width:130px;height:1px;background:#a9a9a9"></div>
<div class="a lpr" style="top:565.5px"><svg width="17" height="17" viewBox="0 0 17 17"><path d="M8 1l7 7-7 7-7-7z" fill="none" stroke="#c49a45" stroke-width="0"/><circle cx="8" cy="8" r="6.3" fill="none" stroke="#c49a45" stroke-width="1.5"/><path d="M3 11L11 3M5 13.5l8-8M2.2 7.5l5.5-5.5" stroke="#c49a45" stroke-width="1.2"/><circle cx="8" cy="1.5" r="1.2" fill="#c49a45"/><circle cx="8" cy="14.5" r="1.2" fill="#c49a45"/><circle cx="1.5" cy="8" r="1.2" fill="#c49a45"/><circle cx="14.5" cy="8" r="1.2" fill="#c49a45"/></svg><span>测量圆</span></div>
<div class="a" style="left:10px;top:591.9px;width:130px;height:1px;background:#a9a9a9"></div>
<div class="a lpr" style="top:592.5px"><svg width="17" height="17" viewBox="0 0 17 17"><circle cx="8" cy="8" r="6.8" fill="none" stroke="#c49a45" stroke-width="1.3"/><path d="M8 8L4.5 4.5M4.5 4.5h2.5M4.5 4.5v2.5" stroke="#c49a45" stroke-width="1.1" fill="none"/></svg><span>半径</span></div>
<div class="a" style="left:10px;top:618.9px;width:130px;height:1px;background:#a9a9a9"></div>
<div class="a lpr" style="top:619.6px"><svg width="17" height="17" viewBox="0 0 17 17"><path d="M1.5 14L10 4M1.5 14H15" stroke="#c49a45" stroke-width="1.3" fill="none"/><circle cx="2" cy="14" r="1.6" fill="#c49a45"/><path d="M9 6c2 2 3 4.5 3.5 7" stroke="#c49a45" stroke-width="1" fill="none"/><path d="M11.5 10.5l1.5 2 .5-2.5z" fill="#c49a45"/></svg><span>测量角度</span></div>
<div class="a" style="left:10px;top:646.0px;width:130px;height:1px;background:#a9a9a9"></div>
<div class="a lpr" style="top:646.7px"><svg width="17" height="17" viewBox="0 0 17 17"><path d="M1.5 15V1.5h14V12" fill="none" stroke="#c49a45" stroke-width="1.2"/><path d="M4 8l3-3 2 2 3-3" fill="none" stroke="#c49a45" stroke-width="1"/><path d="M5 12V10M7 12V9M9 12v-2M11 12V9" stroke="#c49a45" stroke-width="1.1"/><path d="M6 13.5v3M15.5 13.5v3M6 15h9.5" stroke="#c49a45" stroke-width="1"/></svg><span>测量统计</span></div>
<!-- notification -->
<div class="a" style="left:1599px;top:102px;width:307px;height:89px;background:#ffffe1;border-left:1px solid #e8e8c8"></div>
<div class="a" style="left:1609px;top:111px;font-size:12px;line-height:16.6px;color:#000;white-space:nowrap">若打开图纸后出现显示异常问题（绿色条纹，黑屏，闪<br>烁等），您可以尝试<span style="color:#0000ff;font-weight:bold;text-decoration:underline">点击此处</span>切换显示模式来解决。若<br>于问题请直接忽略并关闭本提示。</div>
<div class="a" style="left:1901px;top:111px;font-size:12px;color:#000">1</div>
<div class="a" style="left:1641px;top:169px;font-size:12px;color:#000;white-space:nowrap">如需帮助请查看教程。</div>
<div class="a" style="left:1856px;top:169px;font-size:12px;color:#888;text-decoration:underline;white-space:nowrap">不再提示</div>

<div class="a dlg" style="left:822px;top:292px;width:320px;height:430px">
  <div class="a" style="left:0;top:0;width:318px;height:30px;background:#fff"></div>
  <svg class="a" style="left:7px;top:5px" width="16" height="16"><rect x="0.5" y="0.5" width="15" height="15" rx="2" fill="url(#ig1)" stroke="#333" stroke-width=".6"/><text x="8" y="11" text-anchor="middle" font-size="7" fill="#e8eef8" font-family="Liberation Sans" letter-spacing="-.3">CAD</text></svg>
  <div class="a" style="left:28px;top:6px;font-size:12.5px;color:#000">选择标注分类</div>
  <svg class="a" style="left:299px;top:9px" width="12" height="12"><path d="M1 1l10 10M11 1L1 11" stroke="#222" stroke-width="1.1"/></svg>
  <div class="a" style="left:10px;top:38px;font-size:12px;color:#000;white-space:nowrap">在下方选择分类，这些分类下的标注将显示在表格中</div>
  <div class="a btn" style="left:76px;top:62px;width:48px;height:21px">全选</div>
  <div class="a btn" style="left:196px;top:62px;width:48px;height:21px">全不选</div>
  <div class="a" style="left:11px;top:90px;width:298px;height:300px;background:#fff;border:1px solid #828790"></div>
  <div class="a" style="left:12px;top:91px;width:80px;height:85px;border-right:1px solid #d6d6d6"></div>
  <div class="a" style="left:92px;top:91px;width:100px;height:85px;border-right:1px solid #d6d6d6"></div>
  <div class="a" style="left:12px;top:145px;width:180px;height:1px;background:#d6d6d6"></div>
  <div class="a" style="left:12px;top:175px;width:180px;height:1px;background:#d6d6d6"></div>
  <div class="a" style="left:130px;top:96px;font-size:12px;color:#000">名称</div>
  <div class="a" style="left:126px;top:124px;font-size:12px;color:#000">2根线</div>
  <div class="a" style="left:126px;top:154px;font-size:12px;color:#000">3根线</div>
  <svg class="a" style="left:44px;top:122px" width="14" height="14"><rect x=".5" y=".5" width="13" height="13" fill="#fff" stroke="#333"/><path d="M2.5 7l3 3 6-6.5" fill="none" stroke="#333" stroke-width="1.2"/></svg>
  <svg class="a" style="left:44px;top:152px" width="14" height="14"><rect x=".5" y=".5" width="13" height="13" fill="#fff" stroke="#333"/><path d="M2.5 7l3 3 6-6.5" fill="none" stroke="#333" stroke-width="1.2"/></svg>
  <div class="a btn" style="left:234px;top:396px;width:73px;height:21px;border:2px solid #0078d7;line-height:17px">确定</div>
</div>

<div class="a dlg" style="left:1212px;top:151px;width:536px;height:773px">
<div class="a" style="left:0;top:0;width:534px;height:30px;background:#fff"></div>
<svg class="a" style="left:8px;top:6px" width="16" height="16"><rect x="0.5" y="0.5" width="15" height="15" rx="2" fill="url(#ig1)" stroke="#333" stroke-width=".6"/><text x="8" y="11" text-anchor="middle" font-size="7" fill="#e8eef8" font-family="Liberation Sans" letter-spacing="-.3">CAD</text></svg>
<div class="a" style="left:28px;top:7px;font-size:12.5px;color:#999">测量统计</div>
<svg class="a" style="left:514px;top:8px" width="13" height="13"><path d="M1 1l11 11M12 1L1 12" stroke="#888" stroke-width="1"/></svg>
<div class="a" style="left:11px;top:47px;width:514px;height:73px;border:1px solid #dcdcdc"></div>
<div class="a" style="left:18px;top:39px;padding:0 3px;background:#f0f0f0;font-size:12px">统计范围</div>
<svg class="a" style="left:20px;top:63px" width="14" height="14"><circle cx="7" cy="7" r="6.3" fill="#fff" stroke="#333" stroke-width="1"/><circle cx="7" cy="7" r="3.5" fill="#333"/></svg>
<div class="a" style="left:40px;top:63px;font-size:12px">所有标注</div>
<svg class="a" style="left:20px;top:90px" width="14" height="14"><circle cx="7" cy="7" r="6.3" fill="#fff" stroke="#333" stroke-width="1"/></svg>
<div class="a" style="left:40px;top:90px;font-size:12px">手动选择标注</div>
<div class="a btn" style="left:128px;top:87px;width:63px;height:23px;line-height:21px;background:#cccccc;border-color:#bfbfbf;color:#838383">选择标注</div>
<div class="a btn" style="left:204px;top:87px;width:63px;height:23px;line-height:21px;background:#cccccc;border-color:#bfbfbf;color:#838383">清空选择</div>
<svg class="a" style="left:12px;top:132px" width="13" height="13"><rect x=".5" y=".5" width="12" height="12" fill="#fff" stroke="#333"/><path d="M2.5 6.5l2.5 2.5 5-5.5" fill="none" stroke="#333" stroke-width="1.2"/></svg>
<div class="a" style="left:28px;top:132px;font-size:12px;white-space:nowrap">按标注颜色进行过滤</div>
<div class="a btn" style="left:154px;top:128.5px;width:98px;height:22px;line-height:20px">打开颜色选择框</div>
<svg class="a" style="left:12px;top:163px" width="13" height="13"><rect x=".5" y=".5" width="12" height="12" fill="#fff" stroke="#333"/><path d="M2.5 6.5l2.5 2.5 5-5.5" fill="none" stroke="#333" stroke-width="1.2"/></svg>
<div class="a" style="left:28px;top:163px;font-size:12px;white-space:nowrap">按标注分类进行过滤</div>
<div class="a btn" style="left:154px;top:159.5px;width:98px;height:22px;line-height:20px">打开分类选择框</div>
<div class="a" style="left:13px;top:189px;width:53px;height:22px;background:#cfe3f8;border:1px solid #6a9fd8;border-bottom:none;font-weight:bold;font-size:12px;text-align:center;line-height:21px">长度</div>
<div class="a" style="left:66px;top:192px;width:52px;height:19px;background:#f0f0f0;border:1px solid #adadad;border-bottom:none;font-size:12px;text-align:center;line-height:19px">面积</div>
<div class="a" style="left:11px;top:211px;width:514px;height:408px;background:#fff;border:1px solid #1a1a1a;border-width:2px 2px 2px 1px"></div>
<div class="a" style="left:52.0px;top:212px;width:1px;height:376px;background:#dcdcdc"></div>
<div class="a" style="left:92.5px;top:212px;width:1px;height:376px;background:#dcdcdc"></div>
<div class="a" style="left:192.5px;top:212px;width:1px;height:376px;background:#dcdcdc"></div>
<div class="a" style="left:292.5px;top:212px;width:1px;height:376px;background:#dcdcdc"></div>
<div class="a" style="left:12px;top:237.3px;width:281px;height:1px;background:#dcdcdc"></div>
<div class="a" style="left:12px;top:262.3px;width:281px;height:1px;background:#dcdcdc"></div>
<div class="a" style="left:12px;top:287.3px;width:281px;height:1px;background:#dcdcdc"></div>
<div class="a" style="left:12px;top:312.3px;width:281px;height:1px;background:#dcdcdc"></div>
<div class="a" style="left:12px;top:337.3px;width:281px;height:1px;background:#dcdcdc"></div>
<div class="a" style="left:12px;top:362.3px;width:281px;height:1px;background:#dcdcdc"></div>
<div class="a" style="left:12px;top:387.3px;width:281px;height:1px;background:#dcdcdc"></div>
<div class="a" style="left:12px;top:412.3px;width:281px;height:1px;background:#dcdcdc"></div>
<div class="a" style="left:12px;top:437.3px;width:281px;height:1px;background:#dcdcdc"></div>
<div class="a" style="left:12px;top:462.3px;width:281px;height:1px;background:#dcdcdc"></div>
<div class="a" style="left:12px;top:487.3px;width:281px;height:1px;background:#dcdcdc"></div>
<div class="a" style="left:12px;top:512.3px;width:281px;height:1px;background:#dcdcdc"></div>
<div class="a" style="left:12px;top:537.3px;width:281px;height:1px;background:#dcdcdc"></div>
<div class="a" style="left:12px;top:562.3px;width:281px;height:1px;background:#dcdcdc"></div>
<div class="a" style="left:12px;top:587.3px;width:281px;height:1px;background:#dcdcdc"></div>
<div class="a ctr" style="left:2.0px;top:217px">序号</div>
<div class="a ctr" style="left:42.0px;top:217px">颜色</div>
<div class="a ctr" style="left:112.5px;top:217px">长度</div>
<div class="a ctr" style="left:212.5px;top:217px">分类</div>
<div class="a ctr" style="left:2.0px;top:242.8px">1</div>
<div class="a" style="left:64px;top:242.3px;width:17px;height:17px;background:#ffc0cb;border:1px solid #000"></div>
<div class="a" style="left:96px;top:242.8px;font-size:12px">6785</div>
<div class="a ctr" style="left:212.5px;top:242.8px">3根线</div>
<div class="a ctr" style="left:2.0px;top:267.8px">2</div>
<div class="a" style="left:64px;top:267.3px;width:17px;height:17px;background:#ffc0cb;border:1px solid #000"></div>
<div class="a" style="left:96px;top:267.8px;font-size:12px">4139</div>
<div class="a ctr" style="left:212.5px;top:267.8px">3根线</div>
<div class="a ctr" style="left:2.0px;top:292.8px">3</div>
<div class="a" style="left:64px;top:292.3px;width:17px;height:17px;background:#ffc0cb;border:1px solid #000"></div>
<div class="a" style="left:96px;top:292.8px;font-size:12px">1030</div>
<div class="a ctr" style="left:212.5px;top:292.8px">3根线</div>
<div class="a ctr" style="left:2.0px;top:317.8px">4</div>
<div class="a" style="left:64px;top:317.3px;width:17px;height:17px;background:#ffc0cb;border:1px solid #000"></div>
<div class="a" style="left:96px;top:317.8px;font-size:12px">10581</div>
<div class="a ctr" style="left:212.5px;top:317.8px">3根线</div>
<div class="a ctr" style="left:2.0px;top:342.8px">5</div>
<div class="a" style="left:64px;top:342.3px;width:17px;height:17px;background:#ffc0cb;border:1px solid #000"></div>
<div class="a" style="left:96px;top:342.8px;font-size:12px">7131</div>
<div class="a ctr" style="left:212.5px;top:342.8px">3根线</div>
<div class="a ctr" style="left:2.0px;top:367.8px">6</div>
<div class="a" style="left:64px;top:367.3px;width:17px;height:17px;background:#ffc0cb;border:1px solid #000"></div>
<div class="a" style="left:96px;top:367.8px;font-size:12px">2762</div>
<div class="a ctr" style="left:212.5px;top:367.8px">3根线</div>
<div class="a ctr" style="left:2.0px;top:392.8px">7</div>
<div class="a" style="left:64px;top:392.3px;width:17px;height:17px;background:#ffc0cb;border:1px solid #000"></div>
<div class="a" style="left:96px;top:392.8px;font-size:12px">4340</div>
<div class="a ctr" style="left:212.5px;top:392.8px">3根线</div>
<div class="a ctr" style="left:2.0px;top:417.8px">8</div>
<div class="a" style="left:64px;top:417.3px;width:17px;height:17px;background:#ffc0cb;border:1px solid #000"></div>
<div class="a" style="left:96px;top:417.8px;font-size:12px">3798</div>
<div class="a ctr" style="left:212.5px;top:417.8px">3根线</div>
<div class="a ctr" style="left:2.0px;top:442.8px">9</div>
<div class="a" style="left:64px;top:442.3px;width:17px;height:17px;background:#ffc0cb;border:1px solid #000"></div>
<div class="a" style="left:96px;top:442.8px;font-size:12px">2752</div>
<div class="a ctr" style="left:212.5px;top:442.8px">3根线</div>
<div class="a ctr" style="left:2.0px;top:467.8px">10</div>
<div class="a" style="left:64px;top:467.3px;width:17px;height:17px;background:#ffc0cb;border:1px solid #000"></div>
<div class="a" style="left:96px;top:467.8px;font-size:12px">686</div>
<div class="a ctr" style="left:212.5px;top:467.8px">3根线</div>
<div class="a ctr" style="left:2.0px;top:492.8px">11</div>
<div class="a" style="left:64px;top:492.3px;width:17px;height:17px;background:#00ffff;border:1px solid #000"></div>
<div class="a" style="left:96px;top:492.8px;font-size:12px">2173</div>
<div class="a ctr" style="left:212.5px;top:492.8px">2根线</div>
<div class="a ctr" style="left:2.0px;top:517.8px">12</div>
<div class="a" style="left:64px;top:517.3px;width:17px;height:17px;background:#ffc0cb;border:1px solid #000"></div>
<div class="a" style="left:96px;top:517.8px;font-size:12px">1666</div>
<div class="a ctr" style="left:212.5px;top:517.8px">3根线</div>
<div class="a ctr" style="left:2.0px;top:542.8px">13</div>
<div class="a" style="left:64px;top:542.3px;width:17px;height:17px;background:#00ffff;border:1px solid #000"></div>
<div class="a" style="left:96px;top:542.8px;font-size:12px">1781</div>
<div class="a ctr" style="left:212.5px;top:542.8px">2根线</div>
<div class="a ctr" style="left:2.0px;top:567.8px">14</div>
<div class="a" style="left:64px;top:567.3px;width:17px;height:17px;background:#00ffff;border:1px solid #000"></div>
<div class="a" style="left:96px;top:567.8px;font-size:12px">1352</div>
<div class="a ctr" style="left:212.5px;top:567.8px">2根线</div>
<div class="a" style="left:11px;top:628px;font-size:12px">总计:</div>
<div class="a btn" style="left:446px;top:626px;width:78px;height:21px">复制总计结果</div>
<div class="a" style="left:11px;top:654px;width:514px;height:55px;background:#fff;border:1px solid #7a7a7a"></div>
<div class="a" style="left:16px;top:660px;font-size:11px;line-height:14px;white-space:pre;font-family:'Liberation Mono',monospace">总长度: 50976
总面积: 0; 总周长: 0</div>
<div class="a" style="left:11px;top:716px;width:13px;height:13px;background:#fff;border:1px solid #333"></div>
<div class="a" style="left:28px;top:715px;font-size:12px;white-space:nowrap"><span style="font-family:'Liberation Mono',monospace;font-size:11px;letter-spacing:-.5px">CAD</span>图显示灰色</div>
<div class="a btn" style="left:214px;top:738px;width:108px;height:23px;line-height:21px">导出表格到<span style="font-family:'Liberation Mono',monospace;font-size:11px;letter-spacing:-.5px">Excel</span></div>
</div>
<!-- floating toolbar -->
<div class="a" style="left:766px;top:937px;width:387px;height:37px;background:#646464;border:1px solid #7c7c7c"></div>
<svg class="a" style="left:774px;top:946px" width="20" height="20"><g fill="none" stroke="#e8e8e8" stroke-width="1.5"><rect x="1.5" y="1.5" width="6.5" height="6.5" rx="2"/><rect x="1.5" y="11.5" width="6.5" height="6.5" rx="2"/><rect x="11.5" y="11.5" width="6.5" height="6.5" rx="2"/><path d="M14.8 1l3.8 3.8-3.8 3.8-3.8-3.8z"/></g></svg>
<div class="a" style="left:801px;top:944px;width:1px;height:24px;background:#454545"></div>
<div class="a" style="left:807px;top:947px;font-size:12.5px;color:#f0f0f0;white-space:nowrap">标注分类</div>
<div class="a" style="left:862px;top:942px;width:150px;height:27px;background:#585858;border:1px solid #1e1e1e"></div>
<div class="a" style="left:868px;top:948px;width:14px;height:14px;background:#00ffff;border:1px solid #111"></div>
<div class="a" style="left:885px;top:947px;font-size:12px;color:#fff;white-space:nowrap">2根线</div>
<svg class="a" style="left:997px;top:951px" width="12" height="8"><path d="M0 0h11L5.5 7z" fill="#f0f0f0"/></svg>
<div class="a" style="left:1015px;top:944px;width:1px;height:24px;background:#454545"></div>
<svg class="a" style="left:1024px;top:944px" width="124" height="24"><g fill="none" stroke="#e8e8e8" stroke-width="1.5">
<path d="M12 4H3v16h16v-8"/><path d="M7 16l1-4 9-9 3 3-9 9z"/>
<path d="M44 3v18M35 12h18"/><path d="M41 6l3-3 3 3M41 18l3 3 3-3M38 9l-3 3 3 3M50 9l3 3-3 3"/>
<rect x="69" y="8" width="11" height="12" rx="2"/><path d="M73 8V6a2 2 0 0 1 2-2h7a2 2 0 0 1 2 2v8a2 2 0 0 1-2 2h-2"/>
<rect x="102" y="4" width="12" height="16" rx="2"/><rect x="106" y="10" width="13" height="11" rx="1.5" fill="#646464"/><path d="M105 4V2.5h6V4"/>
</g></svg>
<!-- avatar -->
<svg class="a" style="left:1867px;top:779px" width="40" height="40"><defs><linearGradient id="avg" x1="0" y1="0" x2="0" y2="1"><stop offset="0" stop-color="#fff"/><stop offset="1" stop-color="#c9d9f6"/></linearGradient><clipPath id="avc"><circle cx="20.5" cy="20" r="19.3"/></clipPath></defs>
<circle cx="20.5" cy="20" r="19.3" fill="url(#avg)"/>
<g clip-path="url(#avc)">
<path d="M7 30c-1-10 1-20 7-24 5-3 12-2 16 2 3 4 3 10 2 19l-3 3H9z" fill="#4d3c34"/>
<ellipse cx="22" cy="21" rx="7.5" ry="8.8" fill="#f6d9cc"/>
<path d="M13 17c2-6 12-8 17-3-5-2-12-2-17 3z" fill="#4d3c34"/>
<ellipse cx="18.5" cy="21.5" rx="1.6" ry="1.3" fill="#222"/><ellipse cx="25.5" cy="21.5" rx="1.6" ry="1.3" fill="#222"/>
<ellipse cx="22" cy="26.5" rx="1.6" ry=".8" fill="#e08878"/>
<path d="M19 29h6v4h-6z" fill="#f0cdbf"/>
<path d="M8 42c1-6 6-9 14-9s12 3 13 9z" fill="#111"/>
</g></svg>
<!-- IME bar -->
<div class="a" style="left:1667px;top:1010px;width:239px;height:31px;background:#fff;border:1px solid #e0e0e0;border-radius:6px 0 0 6px"></div>
<svg class="a" style="left:1672px;top:1014px" width="234" height="24">
<path d="M6 7c3-3 10-3 12 0-4-1-8-1-9 2 3 0 9 1 9 5 0 4-7 6-13 4 4 0 10-1 10-3s-6-2-8-2c-3 0-3-4-1-6z" fill="#f26522"/>
<path d="M25 3v18" stroke="#ddd"/>
<text x="48" y="17" text-anchor="middle" font-size="15" fill="#000">中</text>
<circle cx="72" cy="8" r="1.6" fill="none" stroke="#000" stroke-width="1.2"/><path d="M77 13q1 3-2 5" stroke="#000" stroke-width="1.8" fill="none"/>
<rect x="99" y="4" width="6" height="11" rx="3" fill="none" stroke="#000" stroke-width="1.4"/><path d="M97 12q5 6 10 0M102 17v3" stroke="#000" stroke-width="1.3" fill="none"/>
<rect x="127" y="5" width="14" height="13" fill="none" stroke="#000" stroke-width="1.3"/><path d="M130 9h8M130 12h8M131 15h6" stroke="#000" stroke-width="1"/>
<path d="M158 8l6 3 6-3-1 10h-10z" fill="#7b61ff"/><circle cx="170" cy="5" r="2.5" fill="#f55"/>
<g fill="none" stroke="#000" stroke-width="1.4"><rect x="189" y="4" width="6" height="6" rx="1.5"/><rect x="198" y="4" width="6" height="6" rx="1.5"/><rect x="189" y="13" width="6" height="6" rx="1.5"/><rect x="198" y="13" width="6" height="6" rx="1.5"/></g>
<path d="M217 12c2-5 10-5 14-2v8c-4 3-12 2-14-2z" fill="#f26522"/><circle cx="225" cy="13" r="3" fill="#fff"/>
</svg>
<!-- red arrows -->
<svg class="a" style="left:0;top:0;pointer-events:none" width="1906" height="1042">
<g fill="#ff2a0c">
<path d="M445.5 172.8L512.8 90.5 510.6 85.9 526.7 79 522 95.6 518.6 93.5Z"/>
<path d="M974.2 178L976 178 961.8 383 965.3 384.4 955.3 398.5 949.8 382.4 953.8 382.5Z"/>
<path d="M1111 201L1243.6 305.8 1248.3 303.2 1255.6 318.6 1239.5 314.6 1240 311.5Z"/>
</g>
</svg>

</body></html>
